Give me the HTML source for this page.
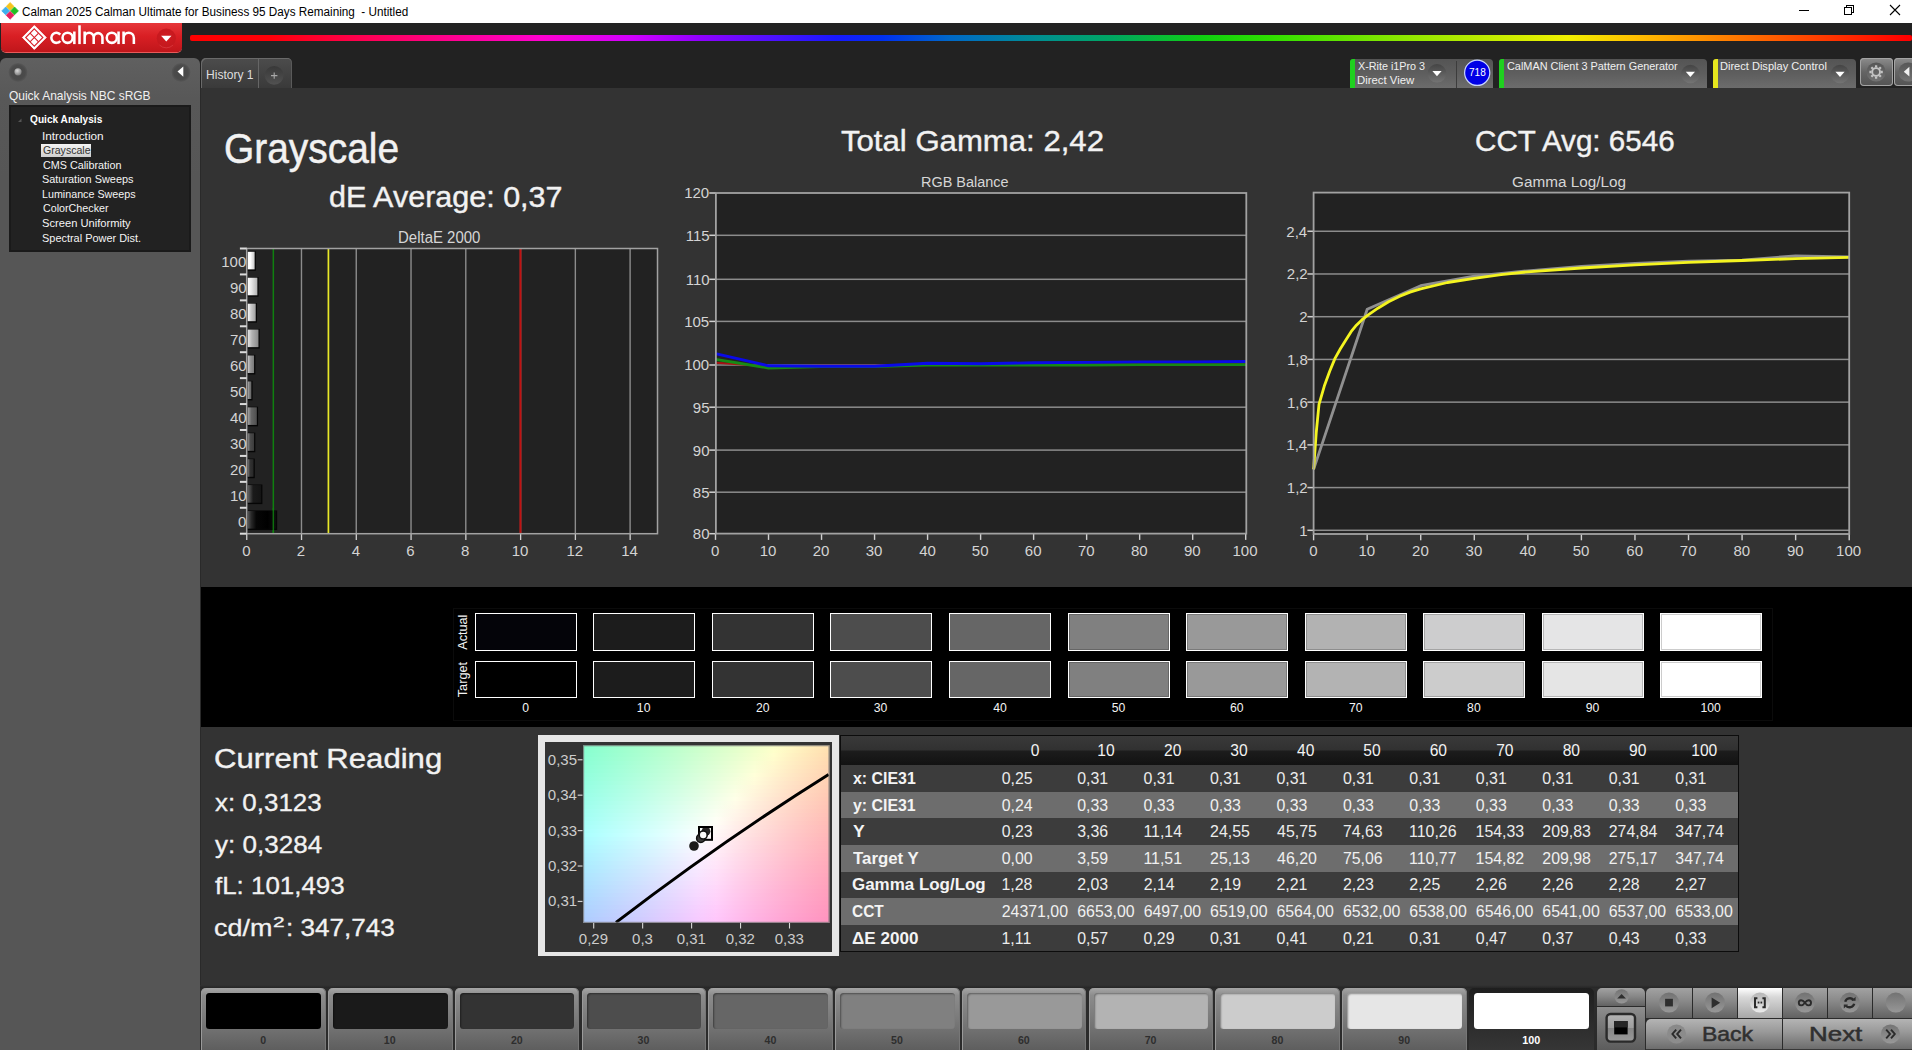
<!DOCTYPE html>
<html><head><meta charset="utf-8"><title>Calman</title>
<style>
html,body{margin:0;padding:0;background:#333;}
body{width:1912px;height:1050px;overflow:hidden;font-family:"Liberation Sans",sans-serif;}
#root{position:relative;width:1912px;height:1050px;overflow:hidden;background:#333;}
.t{position:absolute;white-space:pre;transform-origin:0 0;display:block;}
.a{position:absolute;}
svg{position:absolute;left:0;top:0;overflow:visible;}

</style></head>
<body>
<div id="root">
<div class="a" style="left:0px;top:0px;width:1912px;height:23px;background:#fff;"></div>
<div class="a" style="left:0px;top:23px;width:1912px;height:65px;background:#222;"></div>
<div class="a" style="left:0px;top:58px;width:200px;height:992px;background:linear-gradient(#606060 0px,#585858 40px,#565656 120px);border-radius:6px 6px 0 0;"></div>
<div class="a" style="left:200px;top:88px;width:1712px;height:499px;background:#333;"></div>
<div class="a" style="left:199.6px;top:88px;width:1.2px;height:962px;background:#2a2a2a;"></div>
<div class="a" style="left:201px;top:587px;width:1711px;height:140px;background:#000;"></div>
<div class="a" style="left:201px;top:727px;width:1711px;height:261px;background:#333;"></div>
<svg width="24" height="23" viewBox="0 0 24 23">
<g transform="translate(10.1,10.9)">
<path d="M0,-8.3 L3.9,-4.4 L0,-0.5 L-3.9,-4.4Z" fill="#f5c41e" stroke="#f5c41e" stroke-width=".8" stroke-linejoin="round"/>
<path d="M-8.3,0 L-4.4,-3.9 L-0.5,0 L-4.4,3.9Z" fill="#3fb0ee" stroke="#3fb0ee" stroke-width=".8" stroke-linejoin="round"/>
<path d="M8.3,0 L4.4,3.9 L0.5,0 L4.4,-3.9Z" fill="#22bf22" stroke="#22bf22" stroke-width=".8" stroke-linejoin="round"/>
<path d="M0,8.3 L-3.9,4.4 L0,0.5 L3.9,4.4Z" fill="#e6205e" stroke="#e6205e" stroke-width=".8" stroke-linejoin="round"/>
</g></svg>
<span class="t" style="left:22.30px;top:3px;font-size:12.5px;line-height:18px;color:#000;transform:scaleX(0.9374);">Calman 2025 Calman Ultimate for Business 95 Days Remaining  - Untitled</span>
<svg width="1912" height="23" viewBox="0 0 1912 23" shape-rendering="crispEdges">
<path d="M1799,10.5H1809" stroke="#000" stroke-width="1" fill="none"/>
<path d="M1844.5,7.5H1851.5V14.5H1844.5Z M1846.5,7.5V5.5H1853.5V12.5H1851.5" stroke="#000" stroke-width="1" fill="none"/>
<path d="M1890,5L1900,15M1900,5L1890,15" stroke="#000" stroke-width="1.1" fill="none" shape-rendering="auto"/>
</svg>
<div class="a" style="left:1px;top:23px;width:181px;height:29px;background:linear-gradient(#e6373a 0%,#d91f24 45%,#c0161b 100%);border-radius:0 0 5px 5px;box-shadow:0 1px 0 #e85a5a;"></div>
<svg width="200" height="60" viewBox="0 0 200 60">
<g transform="translate(34.3,37.5)">
<path d="M0,-11.9 L11.9,0 L0,11.9 L-11.9,0Z" fill="#fff" stroke="#fff" stroke-width="1" stroke-linejoin="round"/>
<path d="M0,-8.6 L8.6,0 L0,8.6 L-8.6,0Z" fill="none" stroke="#d8222a" stroke-width="1.1"/>
<path d="M-4.3,-4.3 L4.3,4.3 M4.3,-4.3 L-4.3,4.3" stroke="#d8222a" stroke-width="1.1"/>
</g>
<g fill="none" stroke="#fff" stroke-width="2.55" stroke-linecap="butt">
<path d="M60.3,34.6 A5.05,5.05 0 1 0 60.3,41"/>
<circle cx="67.6" cy="37.8" r="5.05"/>
<path d="M74.35,31.5 V44.1"/>
<path d="M79.5,25.3 V44.1"/>
<path d="M84.65,31.5 V44.1 M84.65,37.3 A4.52,4.52 0 0 1 93.7,37.3 V44.1 M93.7,37.3 A4.38,4.38 0 0 1 102.45,37.3 V44.1"/>
<circle cx="111.8" cy="37.8" r="5.05"/>
<path d="M118.55,31.5 V44.1"/>
<path d="M123.55,31.5 V44.1 M123.55,37.9 A5.15,5.15 0 0 1 133.85,37.9 V44.1"/>
</g>
<defs><radialGradient id="ddr" cx=".5" cy=".4" r=".6"><stop offset="0" stop-color="#d01c22"/><stop offset="1" stop-color="#c4181d"/></radialGradient></defs>
<circle cx="166.3" cy="38.2" r="9.6" fill="url(#ddr)"/>
<path d="M159.5,45 A9.6,9.6 0 0 0 173.1,45" fill="none" stroke="#ec5a5e" stroke-width=".9" opacity=".45"/>
<path d="M161.1,35.7H171.5L166.3,41.5Z" fill="#fff"/>
</svg>
<div class="a" style="left:190px;top:35px;width:1722px;height:6px;background:linear-gradient(90deg,#ff0000 0%,#ff0008 4.6%,#ff0050 9.9%,#ff0090 15.2%,#ff00d0 20.4%,#d000ff 25.7%,#9000ff 29.6%,#5010ff 33.6%,#1818ff 37.5%,#0030f0 40.2%,#0068c8 44.1%,#009090 49.4%,#00a860 53.7%,#10d010 58.9%,#30e000 62.8%,#90e800 70.7%,#f0f000 80%,#ffc000 83.9%,#ff8000 89.1%,#ff4000 94.4%,#ff0000 99.7%);border-radius:2px;"></div>
<svg width="200" height="100" viewBox="0 0 200 100">
<defs>
<radialGradient id="led" cx=".5" cy=".5" r=".5"><stop offset="0" stop-color="#474747"/><stop offset=".75" stop-color="#4b4b4b"/><stop offset="1" stop-color="#585858"/></radialGradient>
<radialGradient id="led2" cx=".4" cy=".35" r=".7"><stop offset="0" stop-color="#d8d8d8"/><stop offset="1" stop-color="#777"/></radialGradient>
</defs>
<circle cx="18" cy="72.5" r="9.5" fill="url(#led)"/>
<circle cx="18" cy="71.8" r="3.6" fill="url(#led2)"/>
<circle cx="181" cy="72.5" r="9.5" fill="url(#led)"/>
<path d="M177.5,71.6 L183.3,66.4 V76.8Z" fill="#fff"/>
</svg>
<span class="t" style="left:8.98px;top:87px;font-size:12.2px;line-height:18px;color:#f0f0f0;transform:scaleX(0.9813);">Quick Analysis NBC sRGB</span>
<div class="a" style="left:9px;top:105px;width:182px;height:147px;background:#222;box-shadow:inset 0 0 0 2px #1a1a1a;"></div>
<svg width="200" height="260" viewBox="0 0 200 260"><path d="M18,122 L21.5,118.5 V122Z" fill="#555"/></svg>
<span class="t" style="left:29.73px;top:111px;font-size:11.5px;line-height:17px;font-weight:700;color:#fff;transform:scaleX(0.8813);">Quick Analysis</span>
<div class="a" style="left:41px;top:143.5px;width:50px;height:13.5px;background:linear-gradient(#f4f4f4,#cfcfcf);"></div>
<span class="t" style="left:42.02px;top:128px;font-size:11.5px;line-height:17px;color:#f4f4f4;transform:scaleX(1.0253);">Introduction</span>
<span class="t" style="left:42.72px;top:142px;font-size:11.5px;line-height:17px;color:#333;transform:scaleX(0.9187);">Grayscale</span>
<span class="t" style="left:42.71px;top:157px;font-size:11.5px;line-height:17px;color:#f4f4f4;transform:scaleX(0.9364);">CMS Calibration</span>
<span class="t" style="left:42.18px;top:171px;font-size:11.5px;line-height:17px;color:#f4f4f4;transform:scaleX(0.9477);">Saturation Sweeps</span>
<span class="t" style="left:42.27px;top:186px;font-size:11.5px;line-height:17px;color:#f4f4f4;transform:scaleX(0.9320);">Luminance Sweeps</span>
<span class="t" style="left:42.71px;top:200px;font-size:11.5px;line-height:17px;color:#f4f4f4;transform:scaleX(0.9322);">ColorChecker</span>
<span class="t" style="left:42.15px;top:215px;font-size:11.5px;line-height:17px;color:#f4f4f4;transform:scaleX(0.9701);">Screen Uniformity</span>
<span class="t" style="left:42.17px;top:230px;font-size:11.5px;line-height:17px;color:#f4f4f4;transform:scaleX(0.9511);">Spectral Power Dist.</span>
<div class="a" style="left:200.5px;top:58px;width:91px;height:30px;background:linear-gradient(#4c4c4c,#3a3a3a);border-radius:5px 5px 0 0;box-shadow:inset 1px 1px 0 #6a6a6a,inset -1px 0 0 #5a5a5a;"></div>
<div class="a" style="left:258px;top:59px;width:1px;height:29px;background:#666;"></div>
<span class="t" style="left:205.69px;top:66px;font-size:12.2px;line-height:18px;color:#dedede;transform:scaleX(0.9895);">History 1</span>
<svg width="300" height="100" viewBox="0 0 300 100">
<defs><linearGradient id="plg" x1="0" y1="0" x2="0" y2="1"><stop offset="0" stop-color="#363636"/><stop offset="1" stop-color="#545454"/></linearGradient></defs>
<circle cx="274.2" cy="75.3" r="9.4" fill="url(#plg)" opacity=".9"/>
<path d="M271,75.6H277.4M274.2,72.4V78.8" stroke="#a8a8a8" stroke-width="1.1" fill="none"/></svg>
<div class="a" style="left:1349.5px;top:58.5px;width:143.0px;height:29.5px;background:linear-gradient(#545454,#5e5e5e 50%,#6c6c6c);border-radius:4px 4px 0 0;"></div>
<div class="a" style="left:1349.5px;top:59px;width:5px;height:29px;background:#1fd01f;border-radius:3px 0 0 0;"></div>
<span class="t" style="left:1357.80px;top:58px;font-size:11.3px;line-height:17px;color:#f0f0f0;transform:scaleX(0.9539);">X-Rite i1Pro 3</span>
<span class="t" style="left:1357.28px;top:72px;font-size:11.3px;line-height:17px;color:#f0f0f0;transform:scaleX(1.0056);">Direct View</span>
<svg width="1912" height="100" viewBox="0 0 1912 100"><defs><linearGradient id="ddg" x1="0" y1="0" x2="0" y2="1"><stop offset="0" stop-color="#444"/><stop offset="1" stop-color="#747474"/></linearGradient></defs><circle cx="1437" cy="73.3" r="9.3" fill="url(#ddg)"/><path d="M1432.4,71.1H1441.6L1437,76.3Z" fill="#fff"/></svg>
<div class="a" style="left:1456px;top:61px;width:1px;height:27px;background:#3c3c3c;"></div>
<svg width="1912" height="100" viewBox="0 0 1912 100">
<circle cx="1477.2" cy="72.8" r="12.6" fill="#0000e6" stroke="#c8d4ff" stroke-width="1.2"/></svg>
<span class="t" style="left:1468.61px;top:65px;font-size:10.4px;line-height:16px;color:#fff;transform:scaleX(0.9691);">718</span>
<div class="a" style="left:1498.5px;top:58.5px;width:208.0px;height:29.5px;background:linear-gradient(#545454,#5e5e5e 50%,#6c6c6c);border-radius:4px 4px 0 0;"></div>
<div class="a" style="left:1498.5px;top:59px;width:5px;height:29px;background:#1fd01f;border-radius:3px 0 0 0;"></div>
<span class="t" style="left:1506.69px;top:58px;font-size:11.3px;line-height:17px;color:#f0f0f0;transform:scaleX(0.9642);">CalMAN Client 3 Pattern Generator</span>
<svg width="1912" height="100" viewBox="0 0 1912 100"><defs><linearGradient id="ddg" x1="0" y1="0" x2="0" y2="1"><stop offset="0" stop-color="#444"/><stop offset="1" stop-color="#747474"/></linearGradient></defs><circle cx="1690.4" cy="74" r="9.3" fill="url(#ddg)"/><path d="M1685.8000000000002,71.8H1695.0L1690.4,77Z" fill="#fff"/></svg>
<div class="a" style="left:1712.5px;top:58.5px;width:143.5px;height:29.5px;background:linear-gradient(#545454,#5e5e5e 50%,#6c6c6c);border-radius:4px 4px 0 0;"></div>
<div class="a" style="left:1712.5px;top:59px;width:5px;height:29px;background:#e6e61e;border-radius:3px 0 0 0;"></div>
<span class="t" style="left:1720.41px;top:58px;font-size:11.3px;line-height:17px;color:#f0f0f0;transform:scaleX(0.9781);">Direct Display Control</span>
<svg width="1912" height="100" viewBox="0 0 1912 100"><defs><linearGradient id="ddg" x1="0" y1="0" x2="0" y2="1"><stop offset="0" stop-color="#444"/><stop offset="1" stop-color="#747474"/></linearGradient></defs><circle cx="1840" cy="74" r="9.3" fill="url(#ddg)"/><path d="M1835.4,71.8H1844.6L1840,77Z" fill="#fff"/></svg>
<div class="a" style="left:1859.5px;top:57.8px;width:33px;height:28px;background:linear-gradient(#8c8c8c,#646464 50%,#545454);border-radius:4px;box-shadow:inset 0 0 0 1px #a4a4a4;"></div>
<div class="a" style="left:1893.6px;top:57.8px;width:24px;height:28px;background:linear-gradient(#8c8c8c,#646464 50%,#545454);border-radius:4px;box-shadow:inset 0 0 0 1px #a4a4a4;"></div>
<svg width="1912" height="100" viewBox="0 0 1912 100">
<defs><linearGradient id="gbg" x1="0" y1="0" x2="0" y2="1"><stop offset="0" stop-color="#4c4c4c"/><stop offset="1" stop-color="#7a7a7a"/></linearGradient></defs>
<circle cx="1876.1" cy="72" r="9.6" fill="url(#gbg)" opacity=".8"/>
<g transform="translate(1876.1,72)" fill="none" stroke="#c4c4c4">
<circle r="3.9" stroke-width="1.9"/>
<g stroke-width="2.3"><path d="M0,-4.6V-6.7M0,4.6V6.7M-4.6,0H-6.7M4.6,0H6.7M3.25,-3.25L4.75,-4.75M-3.25,-3.25L-4.75,-4.75M3.25,3.25L4.75,4.75M-3.25,3.25L-4.75,4.75"/></g>
</g>
<circle cx="1908" cy="72" r="9.6" fill="url(#gbg)" opacity=".8"/>
<path d="M1903.8,71.7 L1909.4,66.8 V76.6Z" fill="#f0f0f0"/>
</svg>
<span class="t" style="left:223.84px;top:120px;font-size:42.5px;line-height:57px;color:#f2f2f2;transform:scaleX(0.9150);-webkit-text-stroke:.5px #f2f2f2;">Grayscale</span>
<span class="t" style="left:329.24px;top:177px;font-size:29.2px;line-height:40px;color:#f2f2f2;transform:scaleX(1.0453);-webkit-text-stroke:.4px #f2f2f2;">dE Average: 0,37</span>
<span class="t" style="left:840.82px;top:121px;font-size:29.2px;line-height:40px;color:#f2f2f2;transform:scaleX(1.0664);-webkit-text-stroke:.4px #f2f2f2;">Total Gamma: 2,42</span>
<span class="t" style="left:1475.43px;top:121px;font-size:29.2px;line-height:40px;color:#f2f2f2;transform:scaleX(1.0141);-webkit-text-stroke:.4px #f2f2f2;">CCT Avg: 6546</span>
<span class="t" style="left:398.01px;top:227px;font-size:15.6px;line-height:22px;color:#d6d6d6;transform:scaleX(0.9602);">DeltaE 2000</span>
<span class="t" style="left:921.35px;top:171px;font-size:15.2px;line-height:22px;color:#d6d6d6;transform:scaleX(0.9524);">RGB Balance</span>
<span class="t" style="left:1511.72px;top:171px;font-size:15.2px;line-height:22px;color:#d6d6d6;transform:scaleX(1.0073);">Gamma Log/Log</span>
<svg width="1912" height="600" viewBox="0 0 1912 600"><defs><linearGradient id="b100"><stop offset="0" stop-color="rgb(255,255,255)"/><stop offset=".4" stop-color="rgb(255,255,255)"/><stop offset="1" stop-color="rgb(198,198,198)"/></linearGradient><linearGradient id="b90"><stop offset="0" stop-color="rgb(255,255,255)"/><stop offset=".4" stop-color="rgb(229,229,229)"/><stop offset="1" stop-color="rgb(178,178,178)"/></linearGradient><linearGradient id="b80"><stop offset="0" stop-color="rgb(253,253,253)"/><stop offset=".4" stop-color="rgb(204,204,204)"/><stop offset="1" stop-color="rgb(159,159,159)"/></linearGradient><linearGradient id="b70"><stop offset="0" stop-color="rgb(231,231,231)"/><stop offset=".4" stop-color="rgb(178,178,178)"/><stop offset="1" stop-color="rgb(138,138,138)"/></linearGradient><linearGradient id="b60"><stop offset="0" stop-color="rgb(210,210,210)"/><stop offset=".4" stop-color="rgb(153,153,153)"/><stop offset="1" stop-color="rgb(119,119,119)"/></linearGradient><linearGradient id="b50"><stop offset="0" stop-color="rgb(187,187,187)"/><stop offset=".4" stop-color="rgb(127,127,127)"/><stop offset="1" stop-color="rgb(99,99,99)"/></linearGradient><linearGradient id="b40"><stop offset="0" stop-color="rgb(166,166,166)"/><stop offset=".4" stop-color="rgb(102,102,102)"/><stop offset="1" stop-color="rgb(79,79,79)"/></linearGradient><linearGradient id="b30"><stop offset="0" stop-color="rgb(144,144,144)"/><stop offset=".4" stop-color="rgb(76,76,76)"/><stop offset="1" stop-color="rgb(59,59,59)"/></linearGradient><linearGradient id="b20"><stop offset="0" stop-color="rgb(123,123,123)"/><stop offset=".4" stop-color="rgb(51,51,51)"/><stop offset="1" stop-color="rgb(39,39,39)"/></linearGradient><linearGradient id="b10"><stop offset="0" stop-color="rgb(102,102,102)"/><stop offset=".4" stop-color="rgb(26,26,26)"/><stop offset="1" stop-color="rgb(20,20,20)"/></linearGradient><linearGradient id="b0"><stop offset="0" stop-color="#5a5a5a"/><stop offset=".12" stop-color="#2a2a2a"/><stop offset=".3" stop-color="#060606"/><stop offset=".7" stop-color="#000"/><stop offset="1" stop-color="#0c0c0c"/></linearGradient></defs><rect x="246.7" y="248.5" width="410.8" height="285.20000000000005" fill="#222"/><rect x="300.77" y="248.5" width="1.4" height="285.20000000000005" fill="#8c8c8c"/><rect x="300.87" y="533.7" width="1.3" height="6.3" fill="#d0d0d0"/><rect x="355.55" y="248.5" width="1.4" height="285.20000000000005" fill="#8c8c8c"/><rect x="355.65" y="533.7" width="1.3" height="6.3" fill="#d0d0d0"/><rect x="410.32" y="248.5" width="1.4" height="285.20000000000005" fill="#8c8c8c"/><rect x="410.42" y="533.7" width="1.3" height="6.3" fill="#d0d0d0"/><rect x="465.09" y="248.5" width="1.4" height="285.20000000000005" fill="#8c8c8c"/><rect x="465.19" y="533.7" width="1.3" height="6.3" fill="#d0d0d0"/><rect x="519.87" y="248.5" width="1.4" height="285.20000000000005" fill="#8c8c8c"/><rect x="519.97" y="533.7" width="1.3" height="6.3" fill="#d0d0d0"/><rect x="574.64" y="248.5" width="1.4" height="285.20000000000005" fill="#8c8c8c"/><rect x="574.74" y="533.7" width="1.3" height="6.3" fill="#d0d0d0"/><rect x="629.41" y="248.5" width="1.4" height="285.20000000000005" fill="#8c8c8c"/><rect x="629.51" y="533.7" width="1.3" height="6.3" fill="#d0d0d0"/><rect x="246.10" y="533.7" width="1.3" height="6.3" fill="#d0d0d0"/><rect x="272.59" y="248.5" width="1.5" height="285.20000000000005" fill="#0f800f"/><rect x="327.56" y="248.5" width="1.7" height="285.20000000000005" fill="#e8e828"/><rect x="519.47" y="248.5" width="2.0" height="285.20000000000005" fill="#c01212"/><rect x="247.30" y="251.16" width="8.54" height="19.6" fill="#050505"/><rect x="247.70" y="251.76" width="6.94" height="17.6" fill="url(#b100)"/><rect x="247.30" y="277.09" width="11.28" height="19.6" fill="#050505"/><rect x="247.70" y="277.69" width="9.68" height="17.6" fill="url(#b90)"/><rect x="247.30" y="303.02" width="9.63" height="19.6" fill="#050505"/><rect x="247.70" y="303.62" width="8.03" height="17.6" fill="url(#b80)"/><rect x="247.30" y="328.95" width="12.37" height="19.6" fill="#050505"/><rect x="247.70" y="329.55" width="10.77" height="17.6" fill="url(#b70)"/><rect x="247.30" y="354.87" width="7.99" height="19.6" fill="#050505"/><rect x="247.70" y="355.47" width="6.39" height="17.6" fill="url(#b60)"/><rect x="247.30" y="380.80" width="5.25" height="19.6" fill="#050505"/><rect x="247.70" y="381.40" width="3.65" height="17.6" fill="url(#b50)"/><rect x="247.30" y="406.73" width="10.73" height="19.6" fill="#050505"/><rect x="247.70" y="407.33" width="9.13" height="17.6" fill="url(#b40)"/><rect x="247.30" y="432.65" width="7.99" height="19.6" fill="#050505"/><rect x="247.70" y="433.25" width="6.39" height="17.6" fill="url(#b30)"/><rect x="247.30" y="458.58" width="7.44" height="19.6" fill="#050505"/><rect x="247.70" y="459.18" width="5.84" height="17.6" fill="url(#b20)"/><rect x="247.30" y="484.51" width="15.11" height="19.6" fill="#050505"/><rect x="247.70" y="485.11" width="13.51" height="17.6" fill="url(#b10)"/><rect x="247.30" y="510.44" width="29.90" height="19.6" fill="#050505"/><rect x="247.70" y="511.04" width="28.30" height="17.6" fill="url(#b0)"/><rect x="272.59" y="507.77" width="1.5" height="25.93" fill="#0f800f" opacity=".85"/><rect x="246.7" y="248.5" width="410.8" height="285.20000000000005" fill="none" stroke="#a2a2a2" stroke-width="1.5"/><rect x="239.90" y="247.50" width="6.8" height="2" fill="#dcdcdc"/><rect x="239.90" y="273.43" width="6.8" height="2" fill="#dcdcdc"/><rect x="239.90" y="299.35" width="6.8" height="2" fill="#dcdcdc"/><rect x="239.90" y="325.28" width="6.8" height="2" fill="#dcdcdc"/><rect x="239.90" y="351.21" width="6.8" height="2" fill="#dcdcdc"/><rect x="239.90" y="377.14" width="6.8" height="2" fill="#dcdcdc"/><rect x="239.90" y="403.06" width="6.8" height="2" fill="#dcdcdc"/><rect x="239.90" y="428.99" width="6.8" height="2" fill="#dcdcdc"/><rect x="239.90" y="454.92" width="6.8" height="2" fill="#dcdcdc"/><rect x="239.90" y="480.85" width="6.8" height="2" fill="#dcdcdc"/><rect x="239.90" y="506.77" width="6.8" height="2" fill="#dcdcdc"/><rect x="239.90" y="532.70" width="6.8" height="2" fill="#dcdcdc"/></svg>
<span class="t" style="left:221.26px;top:251px;font-size:15.0px;line-height:22px;color:#d4d4d4;">100</span>
<span class="t" style="left:229.94px;top:277px;font-size:15.0px;line-height:22px;color:#d4d4d4;">90</span>
<span class="t" style="left:229.94px;top:303px;font-size:15.0px;line-height:22px;color:#d4d4d4;">80</span>
<span class="t" style="left:229.94px;top:329px;font-size:15.0px;line-height:22px;color:#d4d4d4;">70</span>
<span class="t" style="left:229.94px;top:355px;font-size:15.0px;line-height:22px;color:#d4d4d4;">60</span>
<span class="t" style="left:229.94px;top:381px;font-size:15.0px;line-height:22px;color:#d4d4d4;">50</span>
<span class="t" style="left:229.94px;top:407px;font-size:15.0px;line-height:22px;color:#d4d4d4;">40</span>
<span class="t" style="left:229.94px;top:433px;font-size:15.0px;line-height:22px;color:#d4d4d4;">30</span>
<span class="t" style="left:229.94px;top:459px;font-size:15.0px;line-height:22px;color:#d4d4d4;">20</span>
<span class="t" style="left:229.94px;top:485px;font-size:15.0px;line-height:22px;color:#d4d4d4;">10</span>
<span class="t" style="left:238.03px;top:511px;font-size:15.0px;line-height:22px;color:#d4d4d4;">0</span>
<span class="t" style="left:242.20px;top:540px;font-size:15.0px;line-height:22px;color:#d4d4d4;">0</span>
<span class="t" style="left:296.82px;top:540px;font-size:15.0px;line-height:22px;color:#d4d4d4;">2</span>
<span class="t" style="left:351.81px;top:540px;font-size:15.0px;line-height:22px;color:#d4d4d4;">4</span>
<span class="t" style="left:406.34px;top:540px;font-size:15.0px;line-height:22px;color:#d4d4d4;">6</span>
<span class="t" style="left:461.10px;top:540px;font-size:15.0px;line-height:22px;color:#d4d4d4;">8</span>
<span class="t" style="left:511.73px;top:540px;font-size:15.0px;line-height:22px;color:#d4d4d4;">10</span>
<span class="t" style="left:566.51px;top:540px;font-size:15.0px;line-height:22px;color:#d4d4d4;">12</span>
<span class="t" style="left:621.21px;top:540px;font-size:15.0px;line-height:22px;color:#d4d4d4;">14</span>
<svg width="1912" height="600" viewBox="0 0 1912 600"><rect x="715.9" y="193.0" width="530.4" height="340.6" fill="#222"/><rect x="715.9" y="491.45" width="530.4" height="1.5" fill="#8c8c8c"/><rect x="715.9" y="449.35" width="530.4" height="1.5" fill="#8c8c8c"/><rect x="715.9" y="406.45" width="530.4" height="1.5" fill="#8c8c8c"/><rect x="715.9" y="364.25" width="530.4" height="1.5" fill="#8c8c8c"/><rect x="715.9" y="320.65" width="530.4" height="1.5" fill="#8c8c8c"/><rect x="715.9" y="278.55" width="530.4" height="1.5" fill="#8c8c8c"/><rect x="715.9" y="234.55" width="530.4" height="1.5" fill="#8c8c8c"/><rect x="709.30" y="532.95" width="6.6" height="1.5" fill="#d0d0d0"/><rect x="709.30" y="491.45" width="6.6" height="1.5" fill="#d0d0d0"/><rect x="709.30" y="449.35" width="6.6" height="1.5" fill="#d0d0d0"/><rect x="709.30" y="406.45" width="6.6" height="1.5" fill="#d0d0d0"/><rect x="709.30" y="364.25" width="6.6" height="1.5" fill="#d0d0d0"/><rect x="709.30" y="320.65" width="6.6" height="1.5" fill="#d0d0d0"/><rect x="709.30" y="278.55" width="6.6" height="1.5" fill="#d0d0d0"/><rect x="709.30" y="234.55" width="6.6" height="1.5" fill="#d0d0d0"/><rect x="709.30" y="192.25" width="6.6" height="1.5" fill="#d0d0d0"/><rect x="714.80" y="533.6" width="1.4" height="6.3" fill="#d0d0d0"/><rect x="767.82" y="533.6" width="1.4" height="6.3" fill="#d0d0d0"/><rect x="820.84" y="533.6" width="1.4" height="6.3" fill="#d0d0d0"/><rect x="873.86" y="533.6" width="1.4" height="6.3" fill="#d0d0d0"/><rect x="926.88" y="533.6" width="1.4" height="6.3" fill="#d0d0d0"/><rect x="979.90" y="533.6" width="1.4" height="6.3" fill="#d0d0d0"/><rect x="1032.92" y="533.6" width="1.4" height="6.3" fill="#d0d0d0"/><rect x="1085.94" y="533.6" width="1.4" height="6.3" fill="#d0d0d0"/><rect x="1138.96" y="533.6" width="1.4" height="6.3" fill="#d0d0d0"/><rect x="1191.98" y="533.6" width="1.4" height="6.3" fill="#d0d0d0"/><rect x="1245.00" y="533.6" width="1.4" height="6.3" fill="#d0d0d0"/><polyline points="715.5,362.8 768.5,366.3 821.5,365.8 874.6,365.8 927.6,364.6 980.6,365.0 1033.6,364.6 1086.6,364.6 1139.7,364.6 1192.7,364.6 1245.7,364.6" fill="none" stroke="#a81212" stroke-width="2.0" stroke-linejoin="round" stroke-linecap="butt"/><polyline points="715.5,359.3 768.5,368.0 821.5,366.7 874.6,366.7 927.6,365.0 980.6,365.0 1033.6,365.0 1086.6,365.0 1139.7,364.6 1192.7,364.6 1245.7,364.6" fill="none" stroke="#168a16" stroke-width="2.8" stroke-linejoin="round" stroke-linecap="butt"/><polyline points="715.5,353.7 768.5,365.8 821.5,366.3 874.6,366.3 927.6,363.3 980.6,363.7 1033.6,362.8 1086.6,362.4 1139.7,361.9 1192.7,361.9 1245.7,361.5" fill="none" stroke="#0a0ae8" stroke-width="2.9" stroke-linejoin="round" stroke-linecap="butt"/><rect x="715.9" y="193.0" width="530.4" height="340.6" fill="none" stroke="#a2a2a2" stroke-width="1.8"/></svg>
<span class="t" style="left:692.84px;top:523px;font-size:15.0px;line-height:22px;color:#d4d4d4;">80</span>
<span class="t" style="left:692.83px;top:482px;font-size:15.0px;line-height:22px;color:#d4d4d4;">85</span>
<span class="t" style="left:692.84px;top:440px;font-size:15.0px;line-height:22px;color:#d4d4d4;">90</span>
<span class="t" style="left:692.83px;top:397px;font-size:15.0px;line-height:22px;color:#d4d4d4;">95</span>
<span class="t" style="left:684.16px;top:354px;font-size:15.0px;line-height:22px;color:#d4d4d4;">100</span>
<span class="t" style="left:684.17px;top:311px;font-size:15.0px;line-height:22px;color:#d4d4d4;">105</span>
<span class="t" style="left:685.80px;top:269px;font-size:15.0px;line-height:22px;color:#d4d4d4;">110</span>
<span class="t" style="left:685.78px;top:225px;font-size:15.0px;line-height:22px;color:#d4d4d4;">115</span>
<span class="t" style="left:684.16px;top:182px;font-size:15.0px;line-height:22px;color:#d4d4d4;">120</span>
<span class="t" style="left:711.00px;top:540px;font-size:15.0px;line-height:22px;color:#d4d4d4;">0</span>
<span class="t" style="left:759.68px;top:540px;font-size:15.0px;line-height:22px;color:#d4d4d4;">10</span>
<span class="t" style="left:812.79px;top:540px;font-size:15.0px;line-height:22px;color:#d4d4d4;">20</span>
<span class="t" style="left:865.74px;top:540px;font-size:15.0px;line-height:22px;color:#d4d4d4;">30</span>
<span class="t" style="left:919.15px;top:540px;font-size:15.0px;line-height:22px;color:#d4d4d4;">40</span>
<span class="t" style="left:971.81px;top:540px;font-size:15.0px;line-height:22px;color:#d4d4d4;">50</span>
<span class="t" style="left:1024.87px;top:540px;font-size:15.0px;line-height:22px;color:#d4d4d4;">60</span>
<span class="t" style="left:1077.89px;top:540px;font-size:15.0px;line-height:22px;color:#d4d4d4;">70</span>
<span class="t" style="left:1130.88px;top:540px;font-size:15.0px;line-height:22px;color:#d4d4d4;">80</span>
<span class="t" style="left:1183.90px;top:540px;font-size:15.0px;line-height:22px;color:#d4d4d4;">90</span>
<span class="t" style="left:1232.52px;top:540px;font-size:15.0px;line-height:22px;color:#d4d4d4;">100</span>
<svg width="1912" height="600" viewBox="0 0 1912 600"><rect x="1313.6" y="192.6" width="535.6000000000001" height="341.4" fill="#222"/><rect x="1313.6" y="529.55" width="535.6000000000001" height="1.5" fill="#8c8c8c"/><rect x="1307.40" y="529.55" width="6.2" height="1.5" fill="#d0d0d0"/><rect x="1313.6" y="486.83" width="535.6000000000001" height="1.5" fill="#8c8c8c"/><rect x="1307.40" y="486.83" width="6.2" height="1.5" fill="#d0d0d0"/><rect x="1313.6" y="444.11" width="535.6000000000001" height="1.5" fill="#8c8c8c"/><rect x="1307.40" y="444.11" width="6.2" height="1.5" fill="#d0d0d0"/><rect x="1313.6" y="401.39" width="535.6000000000001" height="1.5" fill="#8c8c8c"/><rect x="1307.40" y="401.39" width="6.2" height="1.5" fill="#d0d0d0"/><rect x="1313.6" y="358.67" width="535.6000000000001" height="1.5" fill="#8c8c8c"/><rect x="1307.40" y="358.67" width="6.2" height="1.5" fill="#d0d0d0"/><rect x="1313.6" y="315.95" width="535.6000000000001" height="1.5" fill="#8c8c8c"/><rect x="1307.40" y="315.95" width="6.2" height="1.5" fill="#d0d0d0"/><rect x="1313.6" y="273.23" width="535.6000000000001" height="1.5" fill="#8c8c8c"/><rect x="1307.40" y="273.23" width="6.2" height="1.5" fill="#d0d0d0"/><rect x="1313.6" y="230.51" width="535.6000000000001" height="1.5" fill="#8c8c8c"/><rect x="1307.40" y="230.51" width="6.2" height="1.5" fill="#d0d0d0"/><rect x="1312.90" y="534.0" width="1.4" height="6.3" fill="#d0d0d0"/><rect x="1366.46" y="534.0" width="1.4" height="6.3" fill="#d0d0d0"/><rect x="1420.02" y="534.0" width="1.4" height="6.3" fill="#d0d0d0"/><rect x="1473.58" y="534.0" width="1.4" height="6.3" fill="#d0d0d0"/><rect x="1527.14" y="534.0" width="1.4" height="6.3" fill="#d0d0d0"/><rect x="1580.70" y="534.0" width="1.4" height="6.3" fill="#d0d0d0"/><rect x="1634.26" y="534.0" width="1.4" height="6.3" fill="#d0d0d0"/><rect x="1687.82" y="534.0" width="1.4" height="6.3" fill="#d0d0d0"/><rect x="1741.38" y="534.0" width="1.4" height="6.3" fill="#d0d0d0"/><rect x="1794.94" y="534.0" width="1.4" height="6.3" fill="#d0d0d0"/><rect x="1848.50" y="534.0" width="1.4" height="6.3" fill="#d0d0d0"/><polyline points="1313.6,469.4 1367.2,309.2 1420.7,285.7 1474.3,276.1 1527.8,270.8 1581.4,266.5 1635.0,263.3 1688.5,261.2 1742.1,260.1 1795.6,255.8 1849.2,256.9" fill="none" stroke="#909090" stroke-width="2.8" stroke-linejoin="round" stroke-linecap="butt"/><polyline points="1313.6,469.4 1316.3,432.0 1319.0,404.3 1324.3,386.1 1329.7,371.2 1335.0,358.4 1340.4,348.7 1345.7,340.2 1351.1,331.7 1356.4,325.2 1361.8,319.9 1367.2,315.6 1377.9,308.2 1388.6,301.7 1399.3,296.4 1410.0,292.1 1420.7,288.9 1447.5,282.5 1474.3,278.3 1501.1,274.6 1527.8,271.8 1581.4,268.0 1635.0,264.8 1688.5,262.4 1742.1,260.5 1795.6,258.6 1849.2,257.3" fill="none" stroke="#f4f420" stroke-width="2.8" stroke-linejoin="round" stroke-linecap="butt"/><rect x="1313.6" y="192.6" width="535.6000000000001" height="341.4" fill="none" stroke="#a2a2a2" stroke-width="1.8"/></svg>
<span class="t" style="left:1299.13px;top:520px;font-size:15.0px;line-height:22px;color:#d4d4d4;">1</span>
<span class="t" style="left:1286.84px;top:477px;font-size:15.0px;line-height:22px;color:#d4d4d4;">1,2</span>
<span class="t" style="left:1286.32px;top:434px;font-size:15.0px;line-height:22px;color:#d4d4d4;">1,4</span>
<span class="t" style="left:1286.89px;top:392px;font-size:15.0px;line-height:22px;color:#d4d4d4;">1,6</span>
<span class="t" style="left:1286.89px;top:349px;font-size:15.0px;line-height:22px;color:#d4d4d4;">1,8</span>
<span class="t" style="left:1299.14px;top:306px;font-size:15.0px;line-height:22px;color:#d4d4d4;">2</span>
<span class="t" style="left:1286.84px;top:263px;font-size:15.0px;line-height:22px;color:#d4d4d4;">2,2</span>
<span class="t" style="left:1286.32px;top:221px;font-size:15.0px;line-height:22px;color:#d4d4d4;">2,4</span>
<span class="t" style="left:1309.20px;top:540px;font-size:15.0px;line-height:22px;color:#d4d4d4;">0</span>
<span class="t" style="left:1358.42px;top:540px;font-size:15.0px;line-height:22px;color:#d4d4d4;">10</span>
<span class="t" style="left:1412.07px;top:540px;font-size:15.0px;line-height:22px;color:#d4d4d4;">20</span>
<span class="t" style="left:1465.56px;top:540px;font-size:15.0px;line-height:22px;color:#d4d4d4;">30</span>
<span class="t" style="left:1519.51px;top:540px;font-size:15.0px;line-height:22px;color:#d4d4d4;">40</span>
<span class="t" style="left:1572.71px;top:540px;font-size:15.0px;line-height:22px;color:#d4d4d4;">50</span>
<span class="t" style="left:1626.31px;top:540px;font-size:15.0px;line-height:22px;color:#d4d4d4;">60</span>
<span class="t" style="left:1679.87px;top:540px;font-size:15.0px;line-height:22px;color:#d4d4d4;">70</span>
<span class="t" style="left:1733.40px;top:540px;font-size:15.0px;line-height:22px;color:#d4d4d4;">80</span>
<span class="t" style="left:1786.96px;top:540px;font-size:15.0px;line-height:22px;color:#d4d4d4;">90</span>
<span class="t" style="left:1836.12px;top:540px;font-size:15.0px;line-height:22px;color:#d4d4d4;">100</span>
<div class="a" style="left:453px;top:608px;width:1319.6px;height:112.6px;box-shadow:inset 0 0 0 1px #0b0b0b;"></div>
<div class="a" style="left:475px;top:613px;width:100px;height:36px;border:1px solid #fff;background:#040409;"></div>
<div class="a" style="left:475px;top:661px;width:100px;height:35px;border:1px solid #fff;background:#000000;"></div>
<span class="t" style="left:522.35px;top:699px;font-size:12.2px;line-height:18px;color:#f4f4f4;">0</span>
<div class="a" style="left:593px;top:613px;width:100px;height:36px;border:1px solid #fff;background:#1c1c1c;"></div>
<div class="a" style="left:593px;top:661px;width:100px;height:35px;border:1px solid #fff;background:#1c1c1c;"></div>
<span class="t" style="left:636.87px;top:699px;font-size:12.2px;line-height:18px;color:#f4f4f4;">10</span>
<div class="a" style="left:712px;top:613px;width:100px;height:36px;border:1px solid #fff;background:#333333;"></div>
<div class="a" style="left:712px;top:661px;width:100px;height:35px;border:1px solid #fff;background:#333333;"></div>
<span class="t" style="left:755.90px;top:699px;font-size:12.2px;line-height:18px;color:#f4f4f4;">20</span>
<div class="a" style="left:830px;top:613px;width:100px;height:36px;border:1px solid #fff;background:#4d4d4d;"></div>
<div class="a" style="left:830px;top:661px;width:100px;height:35px;border:1px solid #fff;background:#4d4d4d;"></div>
<span class="t" style="left:873.83px;top:699px;font-size:12.2px;line-height:18px;color:#f4f4f4;">30</span>
<div class="a" style="left:949px;top:613px;width:100px;height:36px;border:1px solid #fff;background:#666666;"></div>
<div class="a" style="left:949px;top:661px;width:100px;height:35px;border:1px solid #fff;background:#666666;"></div>
<span class="t" style="left:993.24px;top:699px;font-size:12.2px;line-height:18px;color:#f4f4f4;">40</span>
<div class="a" style="left:1068px;top:613px;width:100px;height:36px;border:1px solid #fff;background:#808080;box-shadow:inset 0 0 0 1px rgba(0,0,0,.2);"></div>
<div class="a" style="left:1068px;top:661px;width:100px;height:35px;border:1px solid #fff;background:#808080;box-shadow:inset 0 0 0 1px rgba(0,0,0,.2);"></div>
<span class="t" style="left:1111.85px;top:699px;font-size:12.2px;line-height:18px;color:#f4f4f4;">50</span>
<div class="a" style="left:1186px;top:613px;width:100px;height:36px;border:1px solid #fff;background:#999999;box-shadow:inset 0 0 0 1px rgba(0,0,0,.2);"></div>
<div class="a" style="left:1186px;top:661px;width:100px;height:35px;border:1px solid #fff;background:#999999;box-shadow:inset 0 0 0 1px rgba(0,0,0,.2);"></div>
<span class="t" style="left:1229.88px;top:699px;font-size:12.2px;line-height:18px;color:#f4f4f4;">60</span>
<div class="a" style="left:1305px;top:613px;width:100px;height:36px;border:1px solid #fff;background:#b2b2b2;box-shadow:inset 0 0 0 1px rgba(0,0,0,.2);"></div>
<div class="a" style="left:1305px;top:661px;width:100px;height:35px;border:1px solid #fff;background:#b3b3b3;box-shadow:inset 0 0 0 1px rgba(0,0,0,.2);"></div>
<span class="t" style="left:1348.90px;top:699px;font-size:12.2px;line-height:18px;color:#f4f4f4;">70</span>
<div class="a" style="left:1423px;top:613px;width:100px;height:36px;border:1px solid #fff;background:#cdcdce;box-shadow:inset 0 0 0 1px rgba(0,0,0,.2);"></div>
<div class="a" style="left:1423px;top:661px;width:100px;height:35px;border:1px solid #fff;background:#cccccc;box-shadow:inset 0 0 0 1px rgba(0,0,0,.2);"></div>
<span class="t" style="left:1467.11px;top:699px;font-size:12.2px;line-height:18px;color:#f4f4f4;">80</span>
<div class="a" style="left:1542px;top:613px;width:100px;height:36px;border:1px solid #fff;background:#e5e5e6;box-shadow:inset 0 0 0 1px rgba(0,0,0,.2);"></div>
<div class="a" style="left:1542px;top:661px;width:100px;height:35px;border:1px solid #fff;background:#e5e5e5;box-shadow:inset 0 0 0 1px rgba(0,0,0,.2);"></div>
<span class="t" style="left:1585.83px;top:699px;font-size:12.2px;line-height:18px;color:#f4f4f4;">90</span>
<div class="a" style="left:1660px;top:613px;width:100px;height:36px;border:1px solid #fff;background:#ffffff;box-shadow:inset 0 0 0 1px rgba(0,0,0,.2);"></div>
<div class="a" style="left:1660px;top:661px;width:100px;height:35px;border:1px solid #fff;background:#ffffff;box-shadow:inset 0 0 0 1px rgba(0,0,0,.2);"></div>
<span class="t" style="left:1700.39px;top:699px;font-size:12.2px;line-height:18px;color:#f4f4f4;">100</span>
<svg width="1912" height="1050" viewBox="0 0 1912 1050" font-family='"Liberation Sans",sans-serif' font-size="12.6" fill="#f4f4f4">
<text transform="translate(467.4,649.8) rotate(-90)" textLength="35.2" lengthAdjust="spacingAndGlyphs">Actual</text>
<text transform="translate(467.4,697.3) rotate(-90)" textLength="35.4" lengthAdjust="spacingAndGlyphs">Target</text>
</svg>
<span class="t" style="left:213.83px;top:739px;font-size:28.2px;line-height:39px;color:#f2f2f2;transform:scaleX(1.1034);-webkit-text-stroke:.4px #f2f2f2;">Current Reading</span>
<span class="t" style="left:214.80px;top:787px;font-size:23.2px;line-height:32px;color:#f2f2f2;transform:scaleX(1.1178);-webkit-text-stroke:.3px #f2f2f2;">x: 0,3123</span>
<span class="t" style="left:215.08px;top:829px;font-size:23.2px;line-height:32px;color:#f2f2f2;transform:scaleX(1.1231);-webkit-text-stroke:.3px #f2f2f2;">y: 0,3284</span>
<span class="t" style="left:215.02px;top:870px;font-size:23.2px;line-height:32px;color:#f2f2f2;transform:scaleX(1.1176);-webkit-text-stroke:.3px #f2f2f2;">fL: 101,493</span>
<span class="t" style="left:214.02px;top:912px;font-size:23.2px;line-height:32px;color:#f2f2f2;transform:scaleX(1.1615);-webkit-text-stroke:.3px #f2f2f2;">cd/m</span>
<span class="t" style="left:272.99px;top:912px;font-size:14.2px;line-height:20px;color:#f2f2f2;transform:scaleX(1.4728);-webkit-text-stroke:.3px #f2f2f2;">2</span>
<span class="t" style="left:285.79px;top:912px;font-size:23.2px;line-height:32px;color:#f2f2f2;transform:scaleX(1.1261);-webkit-text-stroke:.3px #f2f2f2;">: 347,743</span>
<div class="a" style="left:537.5px;top:735px;width:301.5px;height:221.2px;background:#e6e6e6;"></div>
<div class="a" style="left:544.5px;top:742px;width:287.5px;height:210px;background:#333;"></div>
<svg width="1912" height="1050" viewBox="0 0 1912 1050"><defs><linearGradient id="c0"><stop offset="0.000" stop-color="#86ffce"/><stop offset="0.077" stop-color="#91ffce"/><stop offset="0.154" stop-color="#9cffcd"/><stop offset="0.231" stop-color="#a7ffcd"/><stop offset="0.308" stop-color="#b2ffcc"/><stop offset="0.385" stop-color="#beffcc"/><stop offset="0.462" stop-color="#caffcb"/><stop offset="0.538" stop-color="#d6ffcb"/><stop offset="0.615" stop-color="#e2ffca"/><stop offset="0.692" stop-color="#efffca"/><stop offset="0.769" stop-color="#fbffc9"/><stop offset="0.846" stop-color="#fff6c1"/><stop offset="0.923" stop-color="#ffeab7"/><stop offset="1.000" stop-color="#ffdfae"/></linearGradient><linearGradient id="c1"><stop offset="0.000" stop-color="#88ffd0"/><stop offset="0.077" stop-color="#93ffd0"/><stop offset="0.154" stop-color="#9effcf"/><stop offset="0.231" stop-color="#a9ffcf"/><stop offset="0.308" stop-color="#b4ffce"/><stop offset="0.385" stop-color="#c0ffce"/><stop offset="0.462" stop-color="#ccffcd"/><stop offset="0.538" stop-color="#d8ffcd"/><stop offset="0.615" stop-color="#e4ffcc"/><stop offset="0.692" stop-color="#f1ffcc"/><stop offset="0.769" stop-color="#feffcb"/><stop offset="0.846" stop-color="#fff4c2"/><stop offset="0.923" stop-color="#ffe8b8"/><stop offset="1.000" stop-color="#ffddaf"/></linearGradient><linearGradient id="c2"><stop offset="0.000" stop-color="#89ffd2"/><stop offset="0.077" stop-color="#94ffd2"/><stop offset="0.154" stop-color="#9fffd1"/><stop offset="0.231" stop-color="#aaffd1"/><stop offset="0.308" stop-color="#b6ffd0"/><stop offset="0.385" stop-color="#c2ffd0"/><stop offset="0.462" stop-color="#ceffd0"/><stop offset="0.538" stop-color="#daffcf"/><stop offset="0.615" stop-color="#e6ffcf"/><stop offset="0.692" stop-color="#f3ffce"/><stop offset="0.769" stop-color="#fffecd"/><stop offset="0.846" stop-color="#fff1c2"/><stop offset="0.923" stop-color="#ffe6b8"/><stop offset="1.000" stop-color="#ffdbaf"/></linearGradient><linearGradient id="c3"><stop offset="0.000" stop-color="#8bffd4"/><stop offset="0.077" stop-color="#96ffd4"/><stop offset="0.154" stop-color="#a1ffd3"/><stop offset="0.231" stop-color="#acffd3"/><stop offset="0.308" stop-color="#b8ffd3"/><stop offset="0.385" stop-color="#c3ffd2"/><stop offset="0.462" stop-color="#d0ffd2"/><stop offset="0.538" stop-color="#dcffd1"/><stop offset="0.615" stop-color="#e8ffd1"/><stop offset="0.692" stop-color="#f5ffd0"/><stop offset="0.769" stop-color="#fffccd"/><stop offset="0.846" stop-color="#ffefc2"/><stop offset="0.923" stop-color="#ffe4b9"/><stop offset="1.000" stop-color="#ffd9af"/></linearGradient><linearGradient id="c4"><stop offset="0.000" stop-color="#8cffd6"/><stop offset="0.077" stop-color="#97ffd6"/><stop offset="0.154" stop-color="#a2ffd6"/><stop offset="0.231" stop-color="#aeffd5"/><stop offset="0.308" stop-color="#b9ffd5"/><stop offset="0.385" stop-color="#c5ffd4"/><stop offset="0.462" stop-color="#d2ffd4"/><stop offset="0.538" stop-color="#deffd3"/><stop offset="0.615" stop-color="#ebffd3"/><stop offset="0.692" stop-color="#f8ffd3"/><stop offset="0.769" stop-color="#fff9cd"/><stop offset="0.846" stop-color="#ffedc3"/><stop offset="0.923" stop-color="#ffe2b9"/><stop offset="1.000" stop-color="#ffd7b0"/></linearGradient><linearGradient id="c5"><stop offset="0.000" stop-color="#8effd8"/><stop offset="0.077" stop-color="#99ffd8"/><stop offset="0.154" stop-color="#a4ffd8"/><stop offset="0.231" stop-color="#b0ffd7"/><stop offset="0.308" stop-color="#bbffd7"/><stop offset="0.385" stop-color="#c7ffd6"/><stop offset="0.462" stop-color="#d4ffd6"/><stop offset="0.538" stop-color="#e0ffd6"/><stop offset="0.615" stop-color="#edffd5"/><stop offset="0.692" stop-color="#faffd5"/><stop offset="0.769" stop-color="#fff7ce"/><stop offset="0.846" stop-color="#ffebc3"/><stop offset="0.923" stop-color="#ffe0b9"/><stop offset="1.000" stop-color="#ffd5b0"/></linearGradient><linearGradient id="c6"><stop offset="0.000" stop-color="#8fffda"/><stop offset="0.077" stop-color="#9affda"/><stop offset="0.154" stop-color="#a6ffda"/><stop offset="0.231" stop-color="#b1ffd9"/><stop offset="0.308" stop-color="#bdffd9"/><stop offset="0.385" stop-color="#c9ffd9"/><stop offset="0.462" stop-color="#d6ffd8"/><stop offset="0.538" stop-color="#e2ffd8"/><stop offset="0.615" stop-color="#efffd7"/><stop offset="0.692" stop-color="#fcffd7"/><stop offset="0.769" stop-color="#fff5ce"/><stop offset="0.846" stop-color="#ffe9c3"/><stop offset="0.923" stop-color="#ffdeba"/><stop offset="1.000" stop-color="#ffd3b1"/></linearGradient><linearGradient id="c7"><stop offset="0.000" stop-color="#91ffdd"/><stop offset="0.077" stop-color="#9cffdc"/><stop offset="0.154" stop-color="#a7ffdc"/><stop offset="0.231" stop-color="#b3ffdc"/><stop offset="0.308" stop-color="#bfffdb"/><stop offset="0.385" stop-color="#cbffdb"/><stop offset="0.462" stop-color="#d8ffdb"/><stop offset="0.538" stop-color="#e4ffda"/><stop offset="0.615" stop-color="#f1ffda"/><stop offset="0.692" stop-color="#ffffd9"/><stop offset="0.769" stop-color="#fff3ce"/><stop offset="0.846" stop-color="#ffe7c4"/><stop offset="0.923" stop-color="#ffdcba"/><stop offset="1.000" stop-color="#ffd1b1"/></linearGradient><linearGradient id="c8"><stop offset="0.000" stop-color="#92ffdf"/><stop offset="0.077" stop-color="#9effde"/><stop offset="0.154" stop-color="#a9ffde"/><stop offset="0.231" stop-color="#b5ffde"/><stop offset="0.308" stop-color="#c1ffdd"/><stop offset="0.385" stop-color="#cdffdd"/><stop offset="0.462" stop-color="#daffdd"/><stop offset="0.538" stop-color="#e6ffdc"/><stop offset="0.615" stop-color="#f4ffdc"/><stop offset="0.692" stop-color="#fffdda"/><stop offset="0.769" stop-color="#fff0cf"/><stop offset="0.846" stop-color="#ffe5c4"/><stop offset="0.923" stop-color="#ffdaba"/><stop offset="1.000" stop-color="#ffcfb1"/></linearGradient><linearGradient id="c9"><stop offset="0.000" stop-color="#94ffe1"/><stop offset="0.077" stop-color="#9fffe1"/><stop offset="0.154" stop-color="#abffe0"/><stop offset="0.231" stop-color="#b7ffe0"/><stop offset="0.308" stop-color="#c3ffe0"/><stop offset="0.385" stop-color="#cfffdf"/><stop offset="0.462" stop-color="#dcffdf"/><stop offset="0.538" stop-color="#e9ffdf"/><stop offset="0.615" stop-color="#f6ffde"/><stop offset="0.692" stop-color="#fffbda"/><stop offset="0.769" stop-color="#ffeecf"/><stop offset="0.846" stop-color="#ffe2c5"/><stop offset="0.923" stop-color="#ffd8bb"/><stop offset="1.000" stop-color="#ffceb2"/></linearGradient><linearGradient id="c10"><stop offset="0.000" stop-color="#96ffe3"/><stop offset="0.077" stop-color="#a1ffe3"/><stop offset="0.154" stop-color="#adffe3"/><stop offset="0.231" stop-color="#b9ffe2"/><stop offset="0.308" stop-color="#c5ffe2"/><stop offset="0.385" stop-color="#d1ffe2"/><stop offset="0.462" stop-color="#deffe1"/><stop offset="0.538" stop-color="#ebffe1"/><stop offset="0.615" stop-color="#f8ffe1"/><stop offset="0.692" stop-color="#fff8db"/><stop offset="0.769" stop-color="#ffeccf"/><stop offset="0.846" stop-color="#ffe0c5"/><stop offset="0.923" stop-color="#ffd6bb"/><stop offset="1.000" stop-color="#ffccb2"/></linearGradient><linearGradient id="c11"><stop offset="0.000" stop-color="#97ffe5"/><stop offset="0.077" stop-color="#a3ffe5"/><stop offset="0.154" stop-color="#aeffe5"/><stop offset="0.231" stop-color="#baffe5"/><stop offset="0.308" stop-color="#c7ffe4"/><stop offset="0.385" stop-color="#d3ffe4"/><stop offset="0.462" stop-color="#e0ffe4"/><stop offset="0.538" stop-color="#edffe3"/><stop offset="0.615" stop-color="#fbffe3"/><stop offset="0.692" stop-color="#fff6db"/><stop offset="0.769" stop-color="#ffead0"/><stop offset="0.846" stop-color="#ffdec5"/><stop offset="0.923" stop-color="#ffd4bc"/><stop offset="1.000" stop-color="#ffcab3"/></linearGradient><linearGradient id="c12"><stop offset="0.000" stop-color="#99ffe8"/><stop offset="0.077" stop-color="#a4ffe7"/><stop offset="0.154" stop-color="#b0ffe7"/><stop offset="0.231" stop-color="#bcffe7"/><stop offset="0.308" stop-color="#c9ffe7"/><stop offset="0.385" stop-color="#d5ffe6"/><stop offset="0.462" stop-color="#e2ffe6"/><stop offset="0.538" stop-color="#efffe6"/><stop offset="0.615" stop-color="#fdffe6"/><stop offset="0.692" stop-color="#fff4db"/><stop offset="0.769" stop-color="#ffe8d0"/><stop offset="0.846" stop-color="#ffdcc6"/><stop offset="0.923" stop-color="#ffd2bc"/><stop offset="1.000" stop-color="#ffc8b3"/></linearGradient><linearGradient id="c13"><stop offset="0.000" stop-color="#9bffea"/><stop offset="0.077" stop-color="#a6ffea"/><stop offset="0.154" stop-color="#b2ffe9"/><stop offset="0.231" stop-color="#beffe9"/><stop offset="0.308" stop-color="#cbffe9"/><stop offset="0.385" stop-color="#d7ffe9"/><stop offset="0.462" stop-color="#e4ffe9"/><stop offset="0.538" stop-color="#f2ffe8"/><stop offset="0.615" stop-color="#ffffe8"/><stop offset="0.692" stop-color="#fff2dc"/><stop offset="0.769" stop-color="#ffe5d0"/><stop offset="0.846" stop-color="#ffdac6"/><stop offset="0.923" stop-color="#ffd0bc"/><stop offset="1.000" stop-color="#ffc6b3"/></linearGradient><linearGradient id="c14"><stop offset="0.000" stop-color="#9cffec"/><stop offset="0.077" stop-color="#a8ffec"/><stop offset="0.154" stop-color="#b4ffec"/><stop offset="0.231" stop-color="#c0ffec"/><stop offset="0.308" stop-color="#cdffeb"/><stop offset="0.385" stop-color="#daffeb"/><stop offset="0.462" stop-color="#e7ffeb"/><stop offset="0.538" stop-color="#f4ffeb"/><stop offset="0.615" stop-color="#fffce8"/><stop offset="0.692" stop-color="#ffefdc"/><stop offset="0.769" stop-color="#ffe3d1"/><stop offset="0.846" stop-color="#ffd8c6"/><stop offset="0.923" stop-color="#ffcebd"/><stop offset="1.000" stop-color="#ffc4b4"/></linearGradient><linearGradient id="c15"><stop offset="0.000" stop-color="#9effee"/><stop offset="0.077" stop-color="#aaffee"/><stop offset="0.154" stop-color="#b6ffee"/><stop offset="0.231" stop-color="#c2ffee"/><stop offset="0.308" stop-color="#cfffee"/><stop offset="0.385" stop-color="#dcffee"/><stop offset="0.462" stop-color="#e9ffed"/><stop offset="0.538" stop-color="#f6ffed"/><stop offset="0.615" stop-color="#fffae8"/><stop offset="0.692" stop-color="#ffeddc"/><stop offset="0.769" stop-color="#ffe1d1"/><stop offset="0.846" stop-color="#ffd6c7"/><stop offset="0.923" stop-color="#ffccbd"/><stop offset="1.000" stop-color="#ffc2b4"/></linearGradient><linearGradient id="c16"><stop offset="0.000" stop-color="#a0fff1"/><stop offset="0.077" stop-color="#acfff1"/><stop offset="0.154" stop-color="#b8fff0"/><stop offset="0.231" stop-color="#c4fff0"/><stop offset="0.308" stop-color="#d1fff0"/><stop offset="0.385" stop-color="#defff0"/><stop offset="0.462" stop-color="#ebfff0"/><stop offset="0.538" stop-color="#f9fff0"/><stop offset="0.615" stop-color="#fff7e9"/><stop offset="0.692" stop-color="#ffebdc"/><stop offset="0.769" stop-color="#ffdfd1"/><stop offset="0.846" stop-color="#ffd4c7"/><stop offset="0.923" stop-color="#ffcabd"/><stop offset="1.000" stop-color="#ffc1b4"/></linearGradient><linearGradient id="c17"><stop offset="0.000" stop-color="#a1fff3"/><stop offset="0.077" stop-color="#adfff3"/><stop offset="0.154" stop-color="#bafff3"/><stop offset="0.231" stop-color="#c6fff3"/><stop offset="0.308" stop-color="#d3fff3"/><stop offset="0.385" stop-color="#e0fff3"/><stop offset="0.462" stop-color="#eefff2"/><stop offset="0.538" stop-color="#fbfff2"/><stop offset="0.615" stop-color="#fff5e9"/><stop offset="0.692" stop-color="#ffe9dd"/><stop offset="0.769" stop-color="#ffddd2"/><stop offset="0.846" stop-color="#ffd2c7"/><stop offset="0.923" stop-color="#ffc8be"/><stop offset="1.000" stop-color="#ffbfb5"/></linearGradient><linearGradient id="c18"><stop offset="0.000" stop-color="#a3fff6"/><stop offset="0.077" stop-color="#affff5"/><stop offset="0.154" stop-color="#bcfff5"/><stop offset="0.231" stop-color="#c8fff5"/><stop offset="0.308" stop-color="#d5fff5"/><stop offset="0.385" stop-color="#e2fff5"/><stop offset="0.462" stop-color="#f0fff5"/><stop offset="0.538" stop-color="#fefff5"/><stop offset="0.615" stop-color="#fff3e9"/><stop offset="0.692" stop-color="#ffe6dd"/><stop offset="0.769" stop-color="#ffdbd2"/><stop offset="0.846" stop-color="#ffd0c8"/><stop offset="0.923" stop-color="#ffc6be"/><stop offset="1.000" stop-color="#ffbdb5"/></linearGradient><linearGradient id="c19"><stop offset="0.000" stop-color="#a5fff8"/><stop offset="0.077" stop-color="#b1fff8"/><stop offset="0.154" stop-color="#befff8"/><stop offset="0.231" stop-color="#cafff8"/><stop offset="0.308" stop-color="#d7fff8"/><stop offset="0.385" stop-color="#e5fff8"/><stop offset="0.462" stop-color="#f2fff8"/><stop offset="0.538" stop-color="#fffef6"/><stop offset="0.615" stop-color="#fff0e9"/><stop offset="0.692" stop-color="#ffe4dd"/><stop offset="0.769" stop-color="#ffd9d2"/><stop offset="0.846" stop-color="#ffcec8"/><stop offset="0.923" stop-color="#ffc4be"/><stop offset="1.000" stop-color="#ffbbb5"/></linearGradient><linearGradient id="c20"><stop offset="0.000" stop-color="#a7fffa"/><stop offset="0.077" stop-color="#b3fffa"/><stop offset="0.154" stop-color="#bffffa"/><stop offset="0.231" stop-color="#ccfffa"/><stop offset="0.308" stop-color="#d9fffa"/><stop offset="0.385" stop-color="#e7fffa"/><stop offset="0.462" stop-color="#f5fffa"/><stop offset="0.538" stop-color="#fffbf7"/><stop offset="0.615" stop-color="#ffeeea"/><stop offset="0.692" stop-color="#ffe2de"/><stop offset="0.769" stop-color="#ffd7d3"/><stop offset="0.846" stop-color="#ffccc8"/><stop offset="0.923" stop-color="#ffc2bf"/><stop offset="1.000" stop-color="#ffb9b6"/></linearGradient><linearGradient id="c21"><stop offset="0.000" stop-color="#a8fffd"/><stop offset="0.077" stop-color="#b5fffd"/><stop offset="0.154" stop-color="#c1fffd"/><stop offset="0.231" stop-color="#cefffd"/><stop offset="0.308" stop-color="#dcfffd"/><stop offset="0.385" stop-color="#e9fffd"/><stop offset="0.462" stop-color="#f7fffd"/><stop offset="0.538" stop-color="#fff9f7"/><stop offset="0.615" stop-color="#ffecea"/><stop offset="0.692" stop-color="#ffe0de"/><stop offset="0.769" stop-color="#ffd5d3"/><stop offset="0.846" stop-color="#ffcac9"/><stop offset="0.923" stop-color="#ffc1bf"/><stop offset="1.000" stop-color="#ffb8b6"/></linearGradient><linearGradient id="c22"><stop offset="0.000" stop-color="#aaffff"/><stop offset="0.077" stop-color="#b6ffff"/><stop offset="0.154" stop-color="#c3ffff"/><stop offset="0.231" stop-color="#d0ffff"/><stop offset="0.308" stop-color="#ddffff"/><stop offset="0.385" stop-color="#ebfeff"/><stop offset="0.462" stop-color="#f9feff"/><stop offset="0.538" stop-color="#fff7f7"/><stop offset="0.615" stop-color="#ffeaea"/><stop offset="0.692" stop-color="#ffdede"/><stop offset="0.769" stop-color="#ffd3d3"/><stop offset="0.846" stop-color="#ffc8c9"/><stop offset="0.923" stop-color="#ffbfbf"/><stop offset="1.000" stop-color="#ffb6b7"/></linearGradient><linearGradient id="c23"><stop offset="0.000" stop-color="#aafcff"/><stop offset="0.077" stop-color="#b7fcff"/><stop offset="0.154" stop-color="#c3fcff"/><stop offset="0.231" stop-color="#d0fcff"/><stop offset="0.308" stop-color="#ddfcff"/><stop offset="0.385" stop-color="#ebfcff"/><stop offset="0.462" stop-color="#f9fcff"/><stop offset="0.538" stop-color="#fff4f7"/><stop offset="0.615" stop-color="#ffe7ea"/><stop offset="0.692" stop-color="#ffdbde"/><stop offset="0.769" stop-color="#ffd1d3"/><stop offset="0.846" stop-color="#ffc6c9"/><stop offset="0.923" stop-color="#ffbdc0"/><stop offset="1.000" stop-color="#ffb4b7"/></linearGradient><linearGradient id="c24"><stop offset="0.000" stop-color="#aafaff"/><stop offset="0.077" stop-color="#b7faff"/><stop offset="0.154" stop-color="#c3f9ff"/><stop offset="0.231" stop-color="#d0f9ff"/><stop offset="0.308" stop-color="#ddf9ff"/><stop offset="0.385" stop-color="#ebf9ff"/><stop offset="0.462" stop-color="#f9f9ff"/><stop offset="0.538" stop-color="#fff2f8"/><stop offset="0.615" stop-color="#ffe5eb"/><stop offset="0.692" stop-color="#ffd9df"/><stop offset="0.769" stop-color="#ffcfd4"/><stop offset="0.846" stop-color="#ffc4ca"/><stop offset="0.923" stop-color="#ffbbc0"/><stop offset="1.000" stop-color="#ffb2b7"/></linearGradient><linearGradient id="c25"><stop offset="0.000" stop-color="#abf7ff"/><stop offset="0.077" stop-color="#b7f7ff"/><stop offset="0.154" stop-color="#c3f7ff"/><stop offset="0.231" stop-color="#d0f7ff"/><stop offset="0.308" stop-color="#ddf7ff"/><stop offset="0.385" stop-color="#ebf7ff"/><stop offset="0.462" stop-color="#f8f6ff"/><stop offset="0.538" stop-color="#ffeff8"/><stop offset="0.615" stop-color="#ffe3eb"/><stop offset="0.692" stop-color="#ffd7df"/><stop offset="0.769" stop-color="#ffccd4"/><stop offset="0.846" stop-color="#ffc3ca"/><stop offset="0.923" stop-color="#ffb9c0"/><stop offset="1.000" stop-color="#ffb1b8"/></linearGradient><linearGradient id="c26"><stop offset="0.000" stop-color="#abf5ff"/><stop offset="0.077" stop-color="#b7f5ff"/><stop offset="0.154" stop-color="#c3f4ff"/><stop offset="0.231" stop-color="#d0f4ff"/><stop offset="0.308" stop-color="#ddf4ff"/><stop offset="0.385" stop-color="#ebf4ff"/><stop offset="0.462" stop-color="#f8f4ff"/><stop offset="0.538" stop-color="#ffedf8"/><stop offset="0.615" stop-color="#ffe1eb"/><stop offset="0.692" stop-color="#ffd5df"/><stop offset="0.769" stop-color="#ffcbd4"/><stop offset="0.846" stop-color="#ffc1ca"/><stop offset="0.923" stop-color="#ffb8c1"/><stop offset="1.000" stop-color="#ffafb8"/></linearGradient><linearGradient id="c27"><stop offset="0.000" stop-color="#abf2ff"/><stop offset="0.077" stop-color="#b7f2ff"/><stop offset="0.154" stop-color="#c3f2ff"/><stop offset="0.231" stop-color="#d0f2ff"/><stop offset="0.308" stop-color="#ddf2ff"/><stop offset="0.385" stop-color="#ebf1ff"/><stop offset="0.462" stop-color="#f8f1ff"/><stop offset="0.538" stop-color="#ffebf8"/><stop offset="0.615" stop-color="#ffdeeb"/><stop offset="0.692" stop-color="#ffd3e0"/><stop offset="0.769" stop-color="#ffc9d5"/><stop offset="0.846" stop-color="#ffbfca"/><stop offset="0.923" stop-color="#ffb6c1"/><stop offset="1.000" stop-color="#ffadb8"/></linearGradient><linearGradient id="c28"><stop offset="0.000" stop-color="#abf0ff"/><stop offset="0.077" stop-color="#b7f0ff"/><stop offset="0.154" stop-color="#c4f0ff"/><stop offset="0.231" stop-color="#d0efff"/><stop offset="0.308" stop-color="#ddefff"/><stop offset="0.385" stop-color="#eaefff"/><stop offset="0.462" stop-color="#f8efff"/><stop offset="0.538" stop-color="#ffe8f8"/><stop offset="0.615" stop-color="#ffdcec"/><stop offset="0.692" stop-color="#ffd1e0"/><stop offset="0.769" stop-color="#ffc7d5"/><stop offset="0.846" stop-color="#ffbdcb"/><stop offset="0.923" stop-color="#ffb4c1"/><stop offset="1.000" stop-color="#ffacb9"/></linearGradient><linearGradient id="c29"><stop offset="0.000" stop-color="#abeeff"/><stop offset="0.077" stop-color="#b7edff"/><stop offset="0.154" stop-color="#c4edff"/><stop offset="0.231" stop-color="#d0edff"/><stop offset="0.308" stop-color="#ddedff"/><stop offset="0.385" stop-color="#eaecff"/><stop offset="0.462" stop-color="#f8ecff"/><stop offset="0.538" stop-color="#ffe6f9"/><stop offset="0.615" stop-color="#ffdaec"/><stop offset="0.692" stop-color="#ffcfe0"/><stop offset="0.769" stop-color="#ffc5d5"/><stop offset="0.846" stop-color="#ffbbcb"/><stop offset="0.923" stop-color="#ffb2c2"/><stop offset="1.000" stop-color="#ffaab9"/></linearGradient><linearGradient id="c30"><stop offset="0.000" stop-color="#abebff"/><stop offset="0.077" stop-color="#b7ebff"/><stop offset="0.154" stop-color="#c4ebff"/><stop offset="0.231" stop-color="#d0eaff"/><stop offset="0.308" stop-color="#ddeaff"/><stop offset="0.385" stop-color="#eaeaff"/><stop offset="0.462" stop-color="#f8eaff"/><stop offset="0.538" stop-color="#ffe4f9"/><stop offset="0.615" stop-color="#ffd8ec"/><stop offset="0.692" stop-color="#ffcde0"/><stop offset="0.769" stop-color="#ffc3d5"/><stop offset="0.846" stop-color="#ffb9cb"/><stop offset="0.923" stop-color="#ffb0c2"/><stop offset="1.000" stop-color="#ffa8b9"/></linearGradient><linearGradient id="c31"><stop offset="0.000" stop-color="#abe9ff"/><stop offset="0.077" stop-color="#b7e9ff"/><stop offset="0.154" stop-color="#c4e8ff"/><stop offset="0.231" stop-color="#d0e8ff"/><stop offset="0.308" stop-color="#dde8ff"/><stop offset="0.385" stop-color="#eae7ff"/><stop offset="0.462" stop-color="#f7e7ff"/><stop offset="0.538" stop-color="#ffe1f9"/><stop offset="0.615" stop-color="#ffd6ec"/><stop offset="0.692" stop-color="#ffcbe1"/><stop offset="0.769" stop-color="#ffc1d6"/><stop offset="0.846" stop-color="#ffb7cc"/><stop offset="0.923" stop-color="#ffafc2"/><stop offset="1.000" stop-color="#ffa7ba"/></linearGradient><linearGradient id="c32"><stop offset="0.000" stop-color="#ace6ff"/><stop offset="0.077" stop-color="#b8e6ff"/><stop offset="0.154" stop-color="#c4e6ff"/><stop offset="0.231" stop-color="#d0e6ff"/><stop offset="0.308" stop-color="#dde5ff"/><stop offset="0.385" stop-color="#eae5ff"/><stop offset="0.462" stop-color="#f7e5ff"/><stop offset="0.538" stop-color="#ffdff9"/><stop offset="0.615" stop-color="#ffd3ed"/><stop offset="0.692" stop-color="#ffc9e1"/><stop offset="0.769" stop-color="#ffbfd6"/><stop offset="0.846" stop-color="#ffb6cc"/><stop offset="0.923" stop-color="#ffadc3"/><stop offset="1.000" stop-color="#ffa5ba"/></linearGradient><linearGradient id="c33"><stop offset="0.000" stop-color="#ace4ff"/><stop offset="0.077" stop-color="#b8e4ff"/><stop offset="0.154" stop-color="#c4e4ff"/><stop offset="0.231" stop-color="#d0e3ff"/><stop offset="0.308" stop-color="#dde3ff"/><stop offset="0.385" stop-color="#eae3ff"/><stop offset="0.462" stop-color="#f7e2ff"/><stop offset="0.538" stop-color="#ffddf9"/><stop offset="0.615" stop-color="#ffd1ed"/><stop offset="0.692" stop-color="#ffc7e1"/><stop offset="0.769" stop-color="#ffbdd6"/><stop offset="0.846" stop-color="#ffb4cc"/><stop offset="0.923" stop-color="#ffabc3"/><stop offset="1.000" stop-color="#ffa3ba"/></linearGradient><linearGradient id="c34"><stop offset="0.000" stop-color="#ace2ff"/><stop offset="0.077" stop-color="#b8e2ff"/><stop offset="0.154" stop-color="#c4e1ff"/><stop offset="0.231" stop-color="#d0e1ff"/><stop offset="0.308" stop-color="#dde0ff"/><stop offset="0.385" stop-color="#eae0ff"/><stop offset="0.462" stop-color="#f7e0ff"/><stop offset="0.538" stop-color="#ffdbfa"/><stop offset="0.615" stop-color="#ffcfed"/><stop offset="0.692" stop-color="#ffc5e1"/><stop offset="0.769" stop-color="#ffbbd7"/><stop offset="0.846" stop-color="#ffb2cd"/><stop offset="0.923" stop-color="#ffaac3"/><stop offset="1.000" stop-color="#ffa2bb"/></linearGradient><linearGradient id="c35"><stop offset="0.000" stop-color="#ace0ff"/><stop offset="0.077" stop-color="#b8dfff"/><stop offset="0.154" stop-color="#c4dfff"/><stop offset="0.231" stop-color="#d0deff"/><stop offset="0.308" stop-color="#dddeff"/><stop offset="0.385" stop-color="#eadeff"/><stop offset="0.462" stop-color="#f7ddff"/><stop offset="0.538" stop-color="#ffd8fa"/><stop offset="0.615" stop-color="#ffcded"/><stop offset="0.692" stop-color="#ffc3e2"/><stop offset="0.769" stop-color="#ffb9d7"/><stop offset="0.846" stop-color="#ffb0cd"/><stop offset="0.923" stop-color="#ffa8c4"/><stop offset="1.000" stop-color="#ffa0bb"/></linearGradient><linearGradient id="c36"><stop offset="0.000" stop-color="#acddff"/><stop offset="0.077" stop-color="#b8ddff"/><stop offset="0.154" stop-color="#c4ddff"/><stop offset="0.231" stop-color="#d0dcff"/><stop offset="0.308" stop-color="#dddcff"/><stop offset="0.385" stop-color="#eadbff"/><stop offset="0.462" stop-color="#f7dbff"/><stop offset="0.538" stop-color="#ffd6fa"/><stop offset="0.615" stop-color="#ffcbed"/><stop offset="0.692" stop-color="#ffc1e2"/><stop offset="0.769" stop-color="#ffb7d7"/><stop offset="0.846" stop-color="#ffaecd"/><stop offset="0.923" stop-color="#ffa6c4"/><stop offset="1.000" stop-color="#ff9ebb"/></linearGradient><linearGradient id="c37"><stop offset="0.000" stop-color="#acdbff"/><stop offset="0.077" stop-color="#b8dbff"/><stop offset="0.154" stop-color="#c4daff"/><stop offset="0.231" stop-color="#d0daff"/><stop offset="0.308" stop-color="#ddd9ff"/><stop offset="0.385" stop-color="#ead9ff"/><stop offset="0.462" stop-color="#f7d9ff"/><stop offset="0.538" stop-color="#ffd4fa"/><stop offset="0.615" stop-color="#ffc9ee"/><stop offset="0.692" stop-color="#ffbfe2"/><stop offset="0.769" stop-color="#ffb5d7"/><stop offset="0.846" stop-color="#ffadce"/><stop offset="0.923" stop-color="#ffa4c4"/><stop offset="1.000" stop-color="#ff9dbc"/></linearGradient><linearGradient id="c38"><stop offset="0.000" stop-color="#acd9ff"/><stop offset="0.077" stop-color="#b8d8ff"/><stop offset="0.154" stop-color="#c4d8ff"/><stop offset="0.231" stop-color="#d0d8ff"/><stop offset="0.308" stop-color="#ddd7ff"/><stop offset="0.385" stop-color="#e9d7ff"/><stop offset="0.462" stop-color="#f6d6ff"/><stop offset="0.538" stop-color="#ffd2fa"/><stop offset="0.615" stop-color="#ffc7ee"/><stop offset="0.692" stop-color="#ffbde2"/><stop offset="0.769" stop-color="#ffb4d8"/><stop offset="0.846" stop-color="#ffabce"/><stop offset="0.923" stop-color="#ffa3c5"/><stop offset="1.000" stop-color="#ff9bbc"/></linearGradient><linearGradient id="c39"><stop offset="0.000" stop-color="#add7ff"/><stop offset="0.077" stop-color="#b8d6ff"/><stop offset="0.154" stop-color="#c4d6ff"/><stop offset="0.231" stop-color="#d0d5ff"/><stop offset="0.308" stop-color="#ddd5ff"/><stop offset="0.385" stop-color="#e9d4ff"/><stop offset="0.462" stop-color="#f6d4ff"/><stop offset="0.538" stop-color="#ffd0fb"/><stop offset="0.615" stop-color="#ffc5ee"/><stop offset="0.692" stop-color="#ffbbe3"/><stop offset="0.769" stop-color="#ffb2d8"/><stop offset="0.846" stop-color="#ffa9ce"/><stop offset="0.923" stop-color="#ffa1c5"/><stop offset="1.000" stop-color="#ff9abc"/></linearGradient><linearGradient id="c40"><stop offset="0.000" stop-color="#add4ff"/><stop offset="0.077" stop-color="#b8d4ff"/><stop offset="0.154" stop-color="#c4d3ff"/><stop offset="0.231" stop-color="#d0d3ff"/><stop offset="0.308" stop-color="#ddd3ff"/><stop offset="0.385" stop-color="#e9d2ff"/><stop offset="0.462" stop-color="#f6d1ff"/><stop offset="0.538" stop-color="#ffcdfb"/><stop offset="0.615" stop-color="#ffc3ee"/><stop offset="0.692" stop-color="#ffb9e3"/><stop offset="0.769" stop-color="#ffb0d8"/><stop offset="0.846" stop-color="#ffa7ce"/><stop offset="0.923" stop-color="#ff9fc5"/><stop offset="1.000" stop-color="#ff98bd"/></linearGradient><linearGradient id="c41"><stop offset="0.000" stop-color="#add2ff"/><stop offset="0.077" stop-color="#b8d2ff"/><stop offset="0.154" stop-color="#c4d1ff"/><stop offset="0.231" stop-color="#d0d1ff"/><stop offset="0.308" stop-color="#ddd0ff"/><stop offset="0.385" stop-color="#e9d0ff"/><stop offset="0.462" stop-color="#f6cfff"/><stop offset="0.538" stop-color="#ffcbfb"/><stop offset="0.615" stop-color="#ffc1ef"/><stop offset="0.692" stop-color="#ffb7e3"/><stop offset="0.769" stop-color="#ffaed9"/><stop offset="0.846" stop-color="#ffa6cf"/><stop offset="0.923" stop-color="#ff9ec5"/><stop offset="1.000" stop-color="#ff96bd"/></linearGradient><linearGradient id="c42"><stop offset="0.000" stop-color="#add0ff"/><stop offset="0.077" stop-color="#b9d0ff"/><stop offset="0.154" stop-color="#c4cfff"/><stop offset="0.231" stop-color="#d0cfff"/><stop offset="0.308" stop-color="#ddceff"/><stop offset="0.385" stop-color="#e9cdff"/><stop offset="0.462" stop-color="#f6cdff"/><stop offset="0.538" stop-color="#ffc9fb"/><stop offset="0.615" stop-color="#ffbfef"/><stop offset="0.692" stop-color="#ffb5e3"/><stop offset="0.769" stop-color="#ffacd9"/><stop offset="0.846" stop-color="#ffa4cf"/><stop offset="0.923" stop-color="#ff9cc6"/><stop offset="1.000" stop-color="#ff95bd"/></linearGradient><linearGradient id="c43"><stop offset="0.000" stop-color="#adceff"/><stop offset="0.077" stop-color="#b9cdff"/><stop offset="0.154" stop-color="#c4cdff"/><stop offset="0.231" stop-color="#d0ccff"/><stop offset="0.308" stop-color="#ddccff"/><stop offset="0.385" stop-color="#e9cbff"/><stop offset="0.462" stop-color="#f6cbff"/><stop offset="0.538" stop-color="#ffc7fb"/><stop offset="0.615" stop-color="#ffbdef"/><stop offset="0.692" stop-color="#ffb3e4"/><stop offset="0.769" stop-color="#ffaad9"/><stop offset="0.846" stop-color="#ffa2cf"/><stop offset="0.923" stop-color="#ff9ac6"/><stop offset="1.000" stop-color="#ff93be"/></linearGradient><linearGradient id="c44"><stop offset="0.000" stop-color="#adccff"/><stop offset="0.077" stop-color="#b9cbff"/><stop offset="0.154" stop-color="#c4cbff"/><stop offset="0.231" stop-color="#d0caff"/><stop offset="0.308" stop-color="#dccaff"/><stop offset="0.385" stop-color="#e9c9ff"/><stop offset="0.462" stop-color="#f6c8ff"/><stop offset="0.538" stop-color="#ffc5fc"/><stop offset="0.615" stop-color="#ffbbef"/><stop offset="0.692" stop-color="#ffb1e4"/><stop offset="0.769" stop-color="#ffa9d9"/><stop offset="0.846" stop-color="#ffa0d0"/><stop offset="0.923" stop-color="#ff99c6"/><stop offset="1.000" stop-color="#ff92be"/></linearGradient><clipPath id="cclip"><rect x="583.1" y="745.2" width="246.39999999999998" height="177.69999999999993"/></clipPath></defs><g clip-path="url(#cclip)"><rect x="583" y="745" width="248" height="4" fill="url(#c0)" shape-rendering="crispEdges"/><rect x="583" y="749" width="248" height="4" fill="url(#c1)" shape-rendering="crispEdges"/><rect x="583" y="753" width="248" height="4" fill="url(#c2)" shape-rendering="crispEdges"/><rect x="583" y="757" width="248" height="4" fill="url(#c3)" shape-rendering="crispEdges"/><rect x="583" y="761" width="248" height="4" fill="url(#c4)" shape-rendering="crispEdges"/><rect x="583" y="765" width="248" height="4" fill="url(#c5)" shape-rendering="crispEdges"/><rect x="583" y="769" width="248" height="4" fill="url(#c6)" shape-rendering="crispEdges"/><rect x="583" y="773" width="248" height="4" fill="url(#c7)" shape-rendering="crispEdges"/><rect x="583" y="777" width="248" height="4" fill="url(#c8)" shape-rendering="crispEdges"/><rect x="583" y="781" width="248" height="4" fill="url(#c9)" shape-rendering="crispEdges"/><rect x="583" y="785" width="248" height="4" fill="url(#c10)" shape-rendering="crispEdges"/><rect x="583" y="789" width="248" height="4" fill="url(#c11)" shape-rendering="crispEdges"/><rect x="583" y="793" width="248" height="4" fill="url(#c12)" shape-rendering="crispEdges"/><rect x="583" y="797" width="248" height="4" fill="url(#c13)" shape-rendering="crispEdges"/><rect x="583" y="801" width="248" height="4" fill="url(#c14)" shape-rendering="crispEdges"/><rect x="583" y="805" width="248" height="4" fill="url(#c15)" shape-rendering="crispEdges"/><rect x="583" y="809" width="248" height="4" fill="url(#c16)" shape-rendering="crispEdges"/><rect x="583" y="813" width="248" height="4" fill="url(#c17)" shape-rendering="crispEdges"/><rect x="583" y="817" width="248" height="4" fill="url(#c18)" shape-rendering="crispEdges"/><rect x="583" y="821" width="248" height="4" fill="url(#c19)" shape-rendering="crispEdges"/><rect x="583" y="825" width="248" height="4" fill="url(#c20)" shape-rendering="crispEdges"/><rect x="583" y="829" width="248" height="4" fill="url(#c21)" shape-rendering="crispEdges"/><rect x="583" y="833" width="248" height="4" fill="url(#c22)" shape-rendering="crispEdges"/><rect x="583" y="837" width="248" height="4" fill="url(#c23)" shape-rendering="crispEdges"/><rect x="583" y="841" width="248" height="4" fill="url(#c24)" shape-rendering="crispEdges"/><rect x="583" y="845" width="248" height="4" fill="url(#c25)" shape-rendering="crispEdges"/><rect x="583" y="849" width="248" height="4" fill="url(#c26)" shape-rendering="crispEdges"/><rect x="583" y="853" width="248" height="4" fill="url(#c27)" shape-rendering="crispEdges"/><rect x="583" y="857" width="248" height="4" fill="url(#c28)" shape-rendering="crispEdges"/><rect x="583" y="861" width="248" height="4" fill="url(#c29)" shape-rendering="crispEdges"/><rect x="583" y="865" width="248" height="4" fill="url(#c30)" shape-rendering="crispEdges"/><rect x="583" y="869" width="248" height="4" fill="url(#c31)" shape-rendering="crispEdges"/><rect x="583" y="873" width="248" height="4" fill="url(#c32)" shape-rendering="crispEdges"/><rect x="583" y="877" width="248" height="4" fill="url(#c33)" shape-rendering="crispEdges"/><rect x="583" y="881" width="248" height="4" fill="url(#c34)" shape-rendering="crispEdges"/><rect x="583" y="885" width="248" height="4" fill="url(#c35)" shape-rendering="crispEdges"/><rect x="583" y="889" width="248" height="4" fill="url(#c36)" shape-rendering="crispEdges"/><rect x="583" y="893" width="248" height="4" fill="url(#c37)" shape-rendering="crispEdges"/><rect x="583" y="897" width="248" height="4" fill="url(#c38)" shape-rendering="crispEdges"/><rect x="583" y="901" width="248" height="4" fill="url(#c39)" shape-rendering="crispEdges"/><rect x="583" y="905" width="248" height="4" fill="url(#c40)" shape-rendering="crispEdges"/><rect x="583" y="909" width="248" height="4" fill="url(#c41)" shape-rendering="crispEdges"/><rect x="583" y="913" width="248" height="4" fill="url(#c42)" shape-rendering="crispEdges"/><rect x="583" y="917" width="248" height="4" fill="url(#c43)" shape-rendering="crispEdges"/><rect x="583" y="921" width="248" height="4" fill="url(#c44)" shape-rendering="crispEdges"/><path d="M616,922.4 Q722.3,841 828.6,774.4" fill="none" stroke="#000" stroke-width="3"/></g><rect x="583.6" y="745.7" width="245.39999999999998" height="176.69999999999993" fill="none" stroke="#777" stroke-width="1.2" opacity=".75"/><rect x="593.15" y="922.9" width="1.1" height="5.6" fill="#d8d8d8"/><rect x="642.10" y="922.9" width="1.1" height="5.6" fill="#d8d8d8"/><rect x="691.05" y="922.9" width="1.1" height="5.6" fill="#d8d8d8"/><rect x="740.00" y="922.9" width="1.1" height="5.6" fill="#d8d8d8"/><rect x="788.95" y="922.9" width="1.1" height="5.6" fill="#d8d8d8"/><rect x="577.70" y="900.84" width="4.8" height="1.2" fill="#d0d0d0"/><rect x="577.70" y="865.42" width="4.8" height="1.2" fill="#d0d0d0"/><rect x="577.70" y="830.00" width="4.8" height="1.2" fill="#d0d0d0"/><rect x="577.70" y="794.58" width="4.8" height="1.2" fill="#d0d0d0"/><rect x="577.70" y="759.16" width="4.8" height="1.2" fill="#d0d0d0"/><circle cx="694" cy="846" r="4.8" fill="#1a1a1a"/><circle cx="706" cy="831.3" r="4.4" fill="#242424"/><rect x="699" y="827" width="13" height="12.8" fill="none" stroke="#000" stroke-width="2"/><circle cx="700.8" cy="838.3" r="4.2" fill="#3a3a3a" stroke="#111" stroke-width="1.5"/><circle cx="703.2" cy="835" r="4.0" fill="#fafafa" stroke="#111" stroke-width="1.6"/></svg>
<span class="t" style="left:547.95px;top:890px;font-size:15.0px;line-height:22px;color:#ccc;">0,31</span>
<span class="t" style="left:547.96px;top:855px;font-size:15.0px;line-height:22px;color:#ccc;">0,32</span>
<span class="t" style="left:547.93px;top:820px;font-size:15.0px;line-height:22px;color:#ccc;">0,33</span>
<span class="t" style="left:547.68px;top:784px;font-size:15.0px;line-height:22px;color:#ccc;">0,34</span>
<span class="t" style="left:547.87px;top:749px;font-size:15.0px;line-height:22px;color:#ccc;">0,35</span>
<span class="t" style="left:578.86px;top:928px;font-size:15.0px;line-height:22px;color:#ccc;">0,29</span>
<span class="t" style="left:632.08px;top:928px;font-size:15.0px;line-height:22px;color:#ccc;">0,3</span>
<span class="t" style="left:676.76px;top:928px;font-size:15.0px;line-height:22px;color:#ccc;">0,31</span>
<span class="t" style="left:725.71px;top:928px;font-size:15.0px;line-height:22px;color:#ccc;">0,32</span>
<span class="t" style="left:774.65px;top:928px;font-size:15.0px;line-height:22px;color:#ccc;">0,33</span>
<div class="a" style="left:840.0px;top:735.0px;width:898.5999999999999px;height:217.0px;background:#0c0c0c;"></div>
<div class="a" style="left:841.0px;top:736.0px;width:896.5999999999999px;height:28.600000000000023px;background:linear-gradient(#393939 0%,#313131 48%,#1c1c1c 52%,#121212 100%);"></div>
<div class="a" style="left:841.0px;top:764.6px;width:896.5999999999999px;height:27.100000000000023px;background:#3c3c3c;"></div>
<div class="a" style="left:841.0px;top:791.7px;width:896.5999999999999px;height:26.699999999999932px;background:#6d6d6d;"></div>
<div class="a" style="left:841.0px;top:818.4px;width:896.5999999999999px;height:26.800000000000068px;background:#3c3c3c;"></div>
<div class="a" style="left:841.0px;top:845.2px;width:896.5999999999999px;height:26.799999999999955px;background:#6d6d6d;"></div>
<div class="a" style="left:841.0px;top:872.0px;width:896.5999999999999px;height:26.200000000000045px;background:#3c3c3c;"></div>
<div class="a" style="left:841.0px;top:898.2px;width:896.5999999999999px;height:26.799999999999955px;background:#6d6d6d;"></div>
<div class="a" style="left:841.0px;top:925.0px;width:896.5999999999999px;height:26.0px;background:#3c3c3c;"></div>
<span class="t" style="left:1030.81px;top:740px;font-size:15.6px;line-height:22px;color:#f2f2f2;">0</span>
<span class="t" style="left:1097.27px;top:740px;font-size:15.6px;line-height:22px;color:#f2f2f2;">10</span>
<span class="t" style="left:1163.98px;top:740px;font-size:15.6px;line-height:22px;color:#f2f2f2;">20</span>
<span class="t" style="left:1230.37px;top:740px;font-size:15.6px;line-height:22px;color:#f2f2f2;">30</span>
<span class="t" style="left:1297.10px;top:740px;font-size:15.6px;line-height:22px;color:#f2f2f2;">40</span>
<span class="t" style="left:1363.24px;top:740px;font-size:15.6px;line-height:22px;color:#f2f2f2;">50</span>
<span class="t" style="left:1429.68px;top:740px;font-size:15.6px;line-height:22px;color:#f2f2f2;">60</span>
<span class="t" style="left:1496.18px;top:740px;font-size:15.6px;line-height:22px;color:#f2f2f2;">70</span>
<span class="t" style="left:1562.66px;top:740px;font-size:15.6px;line-height:22px;color:#f2f2f2;">80</span>
<span class="t" style="left:1629.07px;top:740px;font-size:15.6px;line-height:22px;color:#f2f2f2;">90</span>
<span class="t" style="left:1691.27px;top:740px;font-size:15.6px;line-height:22px;color:#f2f2f2;">100</span>
<span class="t" style="left:852.72px;top:768px;font-size:15.6px;line-height:22px;font-weight:700;color:#f4f4f4;transform:scaleX(1.0192);">x: CIE31</span>
<span class="t" style="left:1001.71px;top:767px;font-size:15.9px;line-height:23px;color:#ececec;">0,25</span>
<span class="t" style="left:1077.21px;top:767px;font-size:15.9px;line-height:23px;color:#ececec;">0,31</span>
<span class="t" style="left:1143.61px;top:767px;font-size:15.9px;line-height:23px;color:#ececec;">0,31</span>
<span class="t" style="left:1210.01px;top:767px;font-size:15.9px;line-height:23px;color:#ececec;">0,31</span>
<span class="t" style="left:1276.41px;top:767px;font-size:15.9px;line-height:23px;color:#ececec;">0,31</span>
<span class="t" style="left:1342.91px;top:767px;font-size:15.9px;line-height:23px;color:#ececec;">0,31</span>
<span class="t" style="left:1409.31px;top:767px;font-size:15.9px;line-height:23px;color:#ececec;">0,31</span>
<span class="t" style="left:1475.81px;top:767px;font-size:15.9px;line-height:23px;color:#ececec;">0,31</span>
<span class="t" style="left:1542.31px;top:767px;font-size:15.9px;line-height:23px;color:#ececec;">0,31</span>
<span class="t" style="left:1608.71px;top:767px;font-size:15.9px;line-height:23px;color:#ececec;">0,31</span>
<span class="t" style="left:1675.31px;top:767px;font-size:15.9px;line-height:23px;color:#ececec;">0,31</span>
<span class="t" style="left:852.82px;top:795px;font-size:15.6px;line-height:22px;font-weight:700;color:#f4f4f4;transform:scaleX(1.0176);">y: CIE31</span>
<span class="t" style="left:1001.71px;top:794px;font-size:15.9px;line-height:23px;color:#f0f0f0;">0,24</span>
<span class="t" style="left:1077.21px;top:794px;font-size:15.9px;line-height:23px;color:#f0f0f0;">0,33</span>
<span class="t" style="left:1143.61px;top:794px;font-size:15.9px;line-height:23px;color:#f0f0f0;">0,33</span>
<span class="t" style="left:1210.01px;top:794px;font-size:15.9px;line-height:23px;color:#f0f0f0;">0,33</span>
<span class="t" style="left:1276.41px;top:794px;font-size:15.9px;line-height:23px;color:#f0f0f0;">0,33</span>
<span class="t" style="left:1342.91px;top:794px;font-size:15.9px;line-height:23px;color:#f0f0f0;">0,33</span>
<span class="t" style="left:1409.31px;top:794px;font-size:15.9px;line-height:23px;color:#f0f0f0;">0,33</span>
<span class="t" style="left:1475.81px;top:794px;font-size:15.9px;line-height:23px;color:#f0f0f0;">0,33</span>
<span class="t" style="left:1542.31px;top:794px;font-size:15.9px;line-height:23px;color:#f0f0f0;">0,33</span>
<span class="t" style="left:1608.71px;top:794px;font-size:15.9px;line-height:23px;color:#f0f0f0;">0,33</span>
<span class="t" style="left:1675.31px;top:794px;font-size:15.9px;line-height:23px;color:#f0f0f0;">0,33</span>
<span class="t" style="left:852.56px;top:821px;font-size:15.6px;line-height:22px;font-weight:700;color:#f4f4f4;transform:scaleX(1.1302);">Y</span>
<span class="t" style="left:1001.71px;top:820px;font-size:15.9px;line-height:23px;color:#ececec;">0,23</span>
<span class="t" style="left:1077.23px;top:820px;font-size:15.9px;line-height:23px;color:#ececec;">3,36</span>
<span class="t" style="left:1143.41px;top:820px;font-size:15.9px;line-height:23px;color:#ececec;">11,14</span>
<span class="t" style="left:1210.05px;top:820px;font-size:15.9px;line-height:23px;color:#ececec;">24,55</span>
<span class="t" style="left:1277.09px;top:820px;font-size:15.9px;line-height:23px;color:#ececec;">45,75</span>
<span class="t" style="left:1342.95px;top:820px;font-size:15.9px;line-height:23px;color:#ececec;">74,63</span>
<span class="t" style="left:1409.11px;top:820px;font-size:15.9px;line-height:23px;color:#ececec;">110,26</span>
<span class="t" style="left:1475.61px;top:820px;font-size:15.9px;line-height:23px;color:#ececec;">154,33</span>
<span class="t" style="left:1542.35px;top:820px;font-size:15.9px;line-height:23px;color:#ececec;">209,83</span>
<span class="t" style="left:1608.75px;top:820px;font-size:15.9px;line-height:23px;color:#ececec;">274,84</span>
<span class="t" style="left:1675.33px;top:820px;font-size:15.9px;line-height:23px;color:#ececec;">347,74</span>
<span class="t" style="left:852.93px;top:848px;font-size:15.6px;line-height:22px;font-weight:700;color:#f4f4f4;transform:scaleX(1.0792);">Target Y</span>
<span class="t" style="left:1001.71px;top:847px;font-size:15.9px;line-height:23px;color:#f0f0f0;">0,00</span>
<span class="t" style="left:1077.23px;top:847px;font-size:15.9px;line-height:23px;color:#f0f0f0;">3,59</span>
<span class="t" style="left:1143.41px;top:847px;font-size:15.9px;line-height:23px;color:#f0f0f0;">11,51</span>
<span class="t" style="left:1210.05px;top:847px;font-size:15.9px;line-height:23px;color:#f0f0f0;">25,13</span>
<span class="t" style="left:1277.09px;top:847px;font-size:15.9px;line-height:23px;color:#f0f0f0;">46,20</span>
<span class="t" style="left:1342.95px;top:847px;font-size:15.9px;line-height:23px;color:#f0f0f0;">75,06</span>
<span class="t" style="left:1409.11px;top:847px;font-size:15.9px;line-height:23px;color:#f0f0f0;">110,77</span>
<span class="t" style="left:1475.61px;top:847px;font-size:15.9px;line-height:23px;color:#f0f0f0;">154,82</span>
<span class="t" style="left:1542.35px;top:847px;font-size:15.9px;line-height:23px;color:#f0f0f0;">209,98</span>
<span class="t" style="left:1608.75px;top:847px;font-size:15.9px;line-height:23px;color:#f0f0f0;">275,17</span>
<span class="t" style="left:1675.33px;top:847px;font-size:15.9px;line-height:23px;color:#f0f0f0;">347,74</span>
<span class="t" style="left:852.10px;top:874px;font-size:15.6px;line-height:22px;font-weight:700;color:#f4f4f4;transform:scaleX(1.0869);">Gamma Log/Log</span>
<span class="t" style="left:1001.51px;top:873px;font-size:15.9px;line-height:23px;color:#ececec;">1,28</span>
<span class="t" style="left:1077.25px;top:873px;font-size:15.9px;line-height:23px;color:#ececec;">2,03</span>
<span class="t" style="left:1143.65px;top:873px;font-size:15.9px;line-height:23px;color:#ececec;">2,14</span>
<span class="t" style="left:1210.05px;top:873px;font-size:15.9px;line-height:23px;color:#ececec;">2,19</span>
<span class="t" style="left:1276.45px;top:873px;font-size:15.9px;line-height:23px;color:#ececec;">2,21</span>
<span class="t" style="left:1342.95px;top:873px;font-size:15.9px;line-height:23px;color:#ececec;">2,23</span>
<span class="t" style="left:1409.35px;top:873px;font-size:15.9px;line-height:23px;color:#ececec;">2,25</span>
<span class="t" style="left:1475.85px;top:873px;font-size:15.9px;line-height:23px;color:#ececec;">2,26</span>
<span class="t" style="left:1542.35px;top:873px;font-size:15.9px;line-height:23px;color:#ececec;">2,26</span>
<span class="t" style="left:1608.75px;top:873px;font-size:15.9px;line-height:23px;color:#ececec;">2,28</span>
<span class="t" style="left:1675.35px;top:873px;font-size:15.9px;line-height:23px;color:#ececec;">2,27</span>
<span class="t" style="left:852.20px;top:901px;font-size:15.6px;line-height:22px;font-weight:700;color:#f4f4f4;transform:scaleX(0.9889);">CCT</span>
<span class="t" style="left:1001.75px;top:900px;font-size:15.9px;line-height:23px;color:#f0f0f0;">24371,00</span>
<span class="t" style="left:1077.25px;top:900px;font-size:15.9px;line-height:23px;color:#f0f0f0;">6653,00</span>
<span class="t" style="left:1143.65px;top:900px;font-size:15.9px;line-height:23px;color:#f0f0f0;">6497,00</span>
<span class="t" style="left:1210.05px;top:900px;font-size:15.9px;line-height:23px;color:#f0f0f0;">6519,00</span>
<span class="t" style="left:1276.45px;top:900px;font-size:15.9px;line-height:23px;color:#f0f0f0;">6564,00</span>
<span class="t" style="left:1342.95px;top:900px;font-size:15.9px;line-height:23px;color:#f0f0f0;">6532,00</span>
<span class="t" style="left:1409.35px;top:900px;font-size:15.9px;line-height:23px;color:#f0f0f0;">6538,00</span>
<span class="t" style="left:1475.85px;top:900px;font-size:15.9px;line-height:23px;color:#f0f0f0;">6546,00</span>
<span class="t" style="left:1542.35px;top:900px;font-size:15.9px;line-height:23px;color:#f0f0f0;">6541,00</span>
<span class="t" style="left:1608.75px;top:900px;font-size:15.9px;line-height:23px;color:#f0f0f0;">6537,00</span>
<span class="t" style="left:1675.35px;top:900px;font-size:15.9px;line-height:23px;color:#f0f0f0;">6533,00</span>
<span class="t" style="left:852.09px;top:928px;font-size:15.6px;line-height:22px;font-weight:700;color:#f4f4f4;transform:scaleX(1.0948);">ΔE 2000</span>
<span class="t" style="left:1001.51px;top:927px;font-size:15.9px;line-height:23px;color:#ececec;">1,11</span>
<span class="t" style="left:1077.21px;top:927px;font-size:15.9px;line-height:23px;color:#ececec;">0,57</span>
<span class="t" style="left:1143.61px;top:927px;font-size:15.9px;line-height:23px;color:#ececec;">0,29</span>
<span class="t" style="left:1210.01px;top:927px;font-size:15.9px;line-height:23px;color:#ececec;">0,31</span>
<span class="t" style="left:1276.41px;top:927px;font-size:15.9px;line-height:23px;color:#ececec;">0,41</span>
<span class="t" style="left:1342.91px;top:927px;font-size:15.9px;line-height:23px;color:#ececec;">0,21</span>
<span class="t" style="left:1409.31px;top:927px;font-size:15.9px;line-height:23px;color:#ececec;">0,31</span>
<span class="t" style="left:1475.81px;top:927px;font-size:15.9px;line-height:23px;color:#ececec;">0,47</span>
<span class="t" style="left:1542.31px;top:927px;font-size:15.9px;line-height:23px;color:#ececec;">0,37</span>
<span class="t" style="left:1608.71px;top:927px;font-size:15.9px;line-height:23px;color:#ececec;">0,43</span>
<span class="t" style="left:1675.31px;top:927px;font-size:15.9px;line-height:23px;color:#ececec;">0,33</span>
<div class="a" style="left:200px;top:985px;width:1712px;height:65px;background:#2b2b2b;"></div>
<div class="a" style="left:200px;top:985px;width:1712px;height:3px;background:linear-gradient(#333,#262626);"></div>
<div class="a" style="left:201.3px;top:988px;width:124.5px;height:62px;background:linear-gradient(#a6a6a6 0%,#8c8c8c 12%,#7a7a7a 50%,#5e5e5e 100%);border-radius:5px 5px 0 0;box-shadow:inset 1px 0 0 #9a9a9a,inset -1px 0 0 #777;"></div>
<div class="a" style="left:206.3px;top:993px;width:114.6px;height:36px;background:#000;border-radius:3.5px;box-shadow:inset 1px 1px 2px rgba(0,0,0,.4);"></div>
<span class="t" style="left:260.31px;top:1032px;font-size:10.6px;line-height:16px;font-weight:700;color:#2e2e2e;">0</span>
<div class="a" style="left:328.07px;top:988px;width:124.5px;height:62px;background:linear-gradient(#a6a6a6 0%,#8c8c8c 12%,#7a7a7a 50%,#5e5e5e 100%);border-radius:5px 5px 0 0;box-shadow:inset 1px 0 0 #9a9a9a,inset -1px 0 0 #777;"></div>
<div class="a" style="left:333.07px;top:993px;width:114.6px;height:36px;background:#1a1a1a;border-radius:3.5px;box-shadow:inset 1px 1px 2px rgba(0,0,0,.4);"></div>
<span class="t" style="left:383.82px;top:1032px;font-size:10.6px;line-height:16px;font-weight:700;color:#2e2e2e;">10</span>
<div class="a" style="left:454.84px;top:988px;width:124.5px;height:62px;background:linear-gradient(#a6a6a6 0%,#8c8c8c 12%,#7a7a7a 50%,#5e5e5e 100%);border-radius:5px 5px 0 0;box-shadow:inset 1px 0 0 #9a9a9a,inset -1px 0 0 #777;"></div>
<div class="a" style="left:459.84px;top:993px;width:114.6px;height:36px;background:#333;border-radius:3.5px;box-shadow:inset 1px 1px 2px rgba(0,0,0,.4);"></div>
<span class="t" style="left:510.89px;top:1032px;font-size:10.6px;line-height:16px;font-weight:700;color:#2e2e2e;">20</span>
<div class="a" style="left:581.61px;top:988px;width:124.5px;height:62px;background:linear-gradient(#a6a6a6 0%,#8c8c8c 12%,#7a7a7a 50%,#5e5e5e 100%);border-radius:5px 5px 0 0;box-shadow:inset 1px 0 0 #9a9a9a,inset -1px 0 0 #777;"></div>
<div class="a" style="left:586.61px;top:993px;width:114.6px;height:36px;background:#4d4d4d;border-radius:3.5px;box-shadow:inset 1px 1px 2px rgba(0,0,0,.4);"></div>
<span class="t" style="left:637.58px;top:1032px;font-size:10.6px;line-height:16px;font-weight:700;color:#2e2e2e;">30</span>
<div class="a" style="left:708.38px;top:988px;width:124.5px;height:62px;background:linear-gradient(#a6a6a6 0%,#8c8c8c 12%,#7a7a7a 50%,#5e5e5e 100%);border-radius:5px 5px 0 0;box-shadow:inset 1px 0 0 #9a9a9a,inset -1px 0 0 #777;"></div>
<div class="a" style="left:713.38px;top:993px;width:114.6px;height:36px;background:#666;border-radius:3.5px;box-shadow:inset 1px 1px 2px rgba(0,0,0,.4);"></div>
<span class="t" style="left:764.52px;top:1032px;font-size:10.6px;line-height:16px;font-weight:700;color:#2e2e2e;">40</span>
<div class="a" style="left:835.15px;top:988px;width:124.5px;height:62px;background:linear-gradient(#a6a6a6 0%,#8c8c8c 12%,#7a7a7a 50%,#5e5e5e 100%);border-radius:5px 5px 0 0;box-shadow:inset 1px 0 0 #9a9a9a,inset -1px 0 0 #777;"></div>
<div class="a" style="left:840.15px;top:993px;width:114.6px;height:36px;background:#808080;border-radius:3.5px;box-shadow:inset 1px 1px 2px rgba(0,0,0,.4);"></div>
<span class="t" style="left:891.12px;top:1032px;font-size:10.6px;line-height:16px;font-weight:700;color:#2e2e2e;">50</span>
<div class="a" style="left:961.92px;top:988px;width:124.5px;height:62px;background:linear-gradient(#a6a6a6 0%,#8c8c8c 12%,#7a7a7a 50%,#5e5e5e 100%);border-radius:5px 5px 0 0;box-shadow:inset 1px 0 0 #9a9a9a,inset -1px 0 0 #777;"></div>
<div class="a" style="left:966.92px;top:993px;width:114.6px;height:36px;background:#999;border-radius:3.5px;box-shadow:inset 1px 1px 2px rgba(0,0,0,.4);"></div>
<span class="t" style="left:1017.95px;top:1032px;font-size:10.6px;line-height:16px;font-weight:700;color:#2e2e2e;">60</span>
<div class="a" style="left:1088.69px;top:988px;width:124.5px;height:62px;background:linear-gradient(#a6a6a6 0%,#8c8c8c 12%,#7a7a7a 50%,#5e5e5e 100%);border-radius:5px 5px 0 0;box-shadow:inset 1px 0 0 #9a9a9a,inset -1px 0 0 #777;"></div>
<div class="a" style="left:1093.69px;top:993px;width:114.6px;height:36px;background:#b3b3b3;border-radius:3.5px;box-shadow:inset 1px 1px 2px rgba(0,0,0,.4);"></div>
<span class="t" style="left:1144.70px;top:1032px;font-size:10.6px;line-height:16px;font-weight:700;color:#2e2e2e;">70</span>
<div class="a" style="left:1215.46px;top:988px;width:124.5px;height:62px;background:linear-gradient(#a6a6a6 0%,#8c8c8c 12%,#7a7a7a 50%,#5e5e5e 100%);border-radius:5px 5px 0 0;box-shadow:inset 1px 0 0 #9a9a9a,inset -1px 0 0 #777;"></div>
<div class="a" style="left:1220.46px;top:993px;width:114.6px;height:36px;background:#ccc;border-radius:3.5px;box-shadow:inset 1px 1px 2px rgba(0,0,0,.4);"></div>
<span class="t" style="left:1271.51px;top:1032px;font-size:10.6px;line-height:16px;font-weight:700;color:#2e2e2e;">80</span>
<div class="a" style="left:1342.23px;top:988px;width:124.5px;height:62px;background:linear-gradient(#a6a6a6 0%,#8c8c8c 12%,#7a7a7a 50%,#5e5e5e 100%);border-radius:5px 5px 0 0;box-shadow:inset 1px 0 0 #9a9a9a,inset -1px 0 0 #777;"></div>
<div class="a" style="left:1347.23px;top:993px;width:114.6px;height:36px;background:#e6e6e6;border-radius:3.5px;box-shadow:inset 1px 1px 2px rgba(0,0,0,.4);"></div>
<span class="t" style="left:1398.27px;top:1032px;font-size:10.6px;line-height:16px;font-weight:700;color:#2e2e2e;">90</span>
<div class="a" style="left:1469.0px;top:988px;width:125.2px;height:62px;background:linear-gradient(#1e1e1e 0%,#2a2a2a 50%,#363636 100%);border-radius:5px 5px 0 0;"></div>
<div class="a" style="left:1474.2px;top:993px;width:114.8px;height:36px;background:#fff;border-radius:3.5px;"></div>
<span class="t" style="left:1522.28px;top:1032px;font-size:10.8px;line-height:16px;font-weight:700;color:#fff;">100</span>
<div class="a" style="left:1597px;top:988px;width:48.2px;height:18.3px;background:linear-gradient(#a2a2a2 0%,#888 45%,#626262 100%);border-radius:5px 5px 0 0;"></div>
<div class="a" style="left:1597px;top:1007.3px;width:48.2px;height:42.7px;background:linear-gradient(#8e8e8e,#6e6e6e 60%,#5c5c5c);"></div>
<div class="a" style="left:1646.0px;top:988px;width:45.8px;height:30.2px;background:linear-gradient(#a2a2a2 0%,#888 45%,#626262 100%);border-radius:5px 0 0 0;"></div>
<div class="a" style="left:1693.0px;top:988px;width:43.999999999999815px;height:30.2px;background:linear-gradient(#a2a2a2 0%,#888 45%,#626262 100%);"></div>
<div class="a" style="left:1738.1999999999998px;top:988px;width:43.50000000000004px;height:30.2px;background:linear-gradient(#fff 0%,#d8d8d8 30%,#a8a8a8 100%);"></div>
<div class="a" style="left:1782.8999999999999px;top:988px;width:44.00000000000004px;height:30.2px;background:linear-gradient(#a2a2a2 0%,#888 45%,#626262 100%);"></div>
<div class="a" style="left:1828.1px;top:988px;width:44.00000000000004px;height:30.2px;background:linear-gradient(#a2a2a2 0%,#888 45%,#626262 100%);"></div>
<div class="a" style="left:1873.3px;top:988px;width:38.59999999999995px;height:30.2px;background:linear-gradient(#a2a2a2 0%,#888 45%,#626262 100%);"></div>
<div class="a" style="left:1646.0px;top:1019.4px;width:135.7px;height:30.6px;background:linear-gradient(#b4b4b4 0%,#9a9a9a 40%,#6a6a6a 100%);border-radius:5px 0 0 0;"></div>
<div class="a" style="left:1783.0px;top:1019.4px;width:130px;height:30.6px;background:linear-gradient(#b4b4b4 0%,#9a9a9a 40%,#6a6a6a 100%);"></div>
<svg width="1912" height="1050" viewBox="0 0 1912 1050"><defs><linearGradient id="cb" x1="0" y1="0" x2="0" y2="1"><stop offset="0" stop-color="#6e6e6e"/><stop offset="1" stop-color="#9c9c9c"/></linearGradient><linearGradient id="cbh" x1="0" y1="0" x2="0" y2="1"><stop offset="0" stop-color="#b0b0b0"/><stop offset="1" stop-color="#f2f2f2"/></linearGradient><linearGradient id="sq" x1="0" y1="0" x2="0" y2="1"><stop offset="0" stop-color="#b4b4b4"/><stop offset=".5" stop-color="#9e9e9e"/><stop offset=".52" stop-color="#868686"/><stop offset="1" stop-color="#9a9a9a"/></linearGradient></defs><circle cx="1621.6" cy="996.4" r="7.2" fill="url(#cb)" opacity=".9"/><path d="M1617.2,998.6 L1621.6,994 L1626,998.6Z" fill="#2e2e2e"/><rect x="1606.6" y="1014" width="28.4" height="27.6" rx="4" fill="url(#sq)" stroke="#2a2a2a" stroke-width="2.4"/><rect x="1614.2" y="1021" width="13.4" height="13.4" fill="#000"/><rect x="1614.2" y="1021" width="13.4" height="6.4" fill="#262626"/><circle cx="1669.0" cy="1002.6" r="10" fill="url(#cb)" opacity=".9"/><circle cx="1715.0" cy="1002.6" r="10" fill="url(#cb)" opacity=".9"/><circle cx="1759.9" cy="1002.6" r="10" fill="url(#cbh)" opacity=".9"/><circle cx="1804.9" cy="1002.6" r="10" fill="url(#cb)" opacity=".9"/><circle cx="1849.7" cy="1002.6" r="10" fill="url(#cb)" opacity=".9"/><circle cx="1895.8" cy="1002.6" r="10" fill="url(#cb)" opacity=".9"/><rect x="1665.1" y="998.8" width="7.8" height="7.6" fill="#2e2e2e"/><path d="M1711.6,997.4 L1720.2,1002.8 L1711.6,1008.2Z" fill="#2e2e2e"/><path d="M1757.4,998.2H1755V1007.2H1757.4 M1762.4,998.2H1764.8V1007.2H1762.4" fill="none" stroke="#2a2a2a" stroke-width="2"/><rect x="1757.7" y="1001.6" width="1.7" height="1.9" fill="#2a2a2a"/><rect x="1760.5" y="1001.6" width="1.7" height="1.9" fill="#2a2a2a"/><path d="M1804.9,1002.8 C1803.4,1000.6 1802,1000.2 1801.1,1000.2 C1799.7,1000.2 1798.8,1001.3 1798.8,1002.8 C1798.8,1004.3 1799.7,1005.4 1801.1,1005.4 C1802,1005.4 1803.4,1005 1804.9,1002.8 C1806.4,1000.6 1807.8,1000.2 1808.7,1000.2 C1810.1,1000.2 1811,1001.3 1811,1002.8 C1811,1004.3 1810.1,1005.4 1808.7,1005.4 C1807.8,1005.4 1806.4,1005 1804.9,1002.8Z" fill="none" stroke="#2a2a2a" stroke-width="1.9"/><g fill="none" stroke="#2a2a2a" stroke-width="2.4"><path d="M1845.2,1001.8 A4.8,4.8 0 0 1 1853.4,999.9"/><path d="M1854.2,1003.8 A4.8,4.8 0 0 1 1846,1005.7"/></g><path d="M1851.4,1000.8 L1855.6,1000.8 L1855.6,996.8Z M1848,1004.6 L1843.8,1004.6 L1843.8,1008.6Z" fill="#2e2e2e"/><circle cx="1676.5" cy="1034" r="9.6" fill="url(#cb)" opacity=".55"/><circle cx="1890.4" cy="1034" r="9.6" fill="url(#cb)" opacity=".9"/><path d="M1676.2,1029.6 L1672.4,1034 L1676.2,1038.4 M1681,1029.6 L1677.2,1034 L1681,1038.4" fill="none" stroke="#2a2a2a" stroke-width="1.9"/><path d="M1886.2,1029.6 L1890,1034 L1886.2,1038.4 M1891,1029.6 L1894.8,1034 L1891,1038.4" fill="none" stroke="#2a2a2a" stroke-width="1.9"/><rect x="1646" y="1049.2" width="266" height="1" fill="#2c2c2c"/></svg>
<span class="t" style="left:1702.20px;top:1020px;font-size:20.4px;line-height:29px;color:#303030;transform:scaleX(1.1256);-webkit-text-stroke:.5px #303030;">Back</span>
<span class="t" style="left:1808.59px;top:1020px;font-size:20.4px;line-height:29px;color:#303030;transform:scaleX(1.2709);-webkit-text-stroke:.5px #303030;">Next</span>
</div>
</body></html>
